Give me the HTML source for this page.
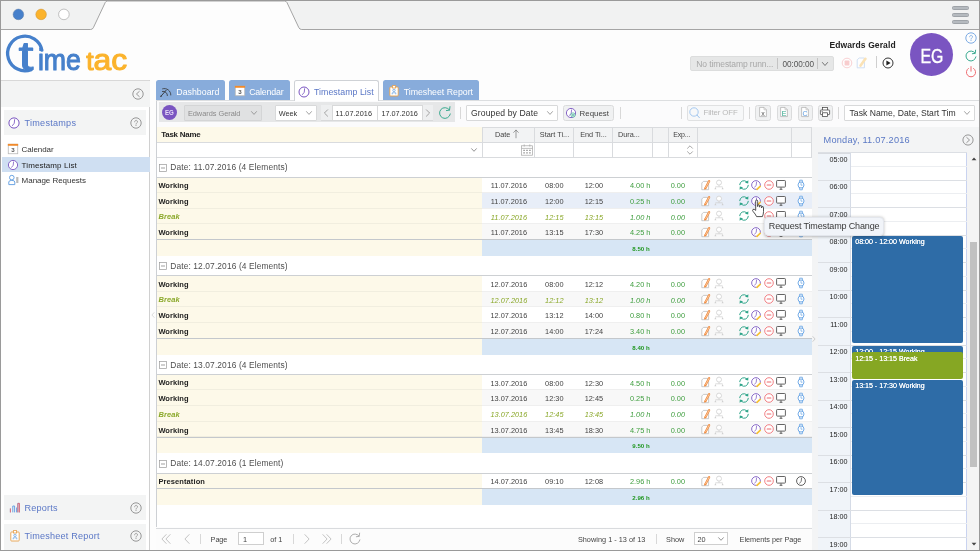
<!DOCTYPE html>
<html><head><meta charset="utf-8"><title>TimeTac - Timestamp List</title>
<style>
html,body{margin:0;padding:0;}
body{width:980px;height:551px;overflow:hidden;position:relative;background:#fdfdfd;font-family:"Liberation Sans",sans-serif;}
#app{position:absolute;left:0;top:0;width:980px;height:551px;overflow:hidden;will-change:transform;}
#app div,#app svg{position:absolute;box-sizing:border-box;}
#app svg{overflow:visible;}
.t{white-space:nowrap;}
</style></head><body><div id="app">
<div style="left:0.00px;top:0.00px;width:980.00px;height:30.00px;background:#f1f2f2;"></div>
<svg style="left:0.00px;top:0.00px;" width="980" height="31" viewBox="0 0 980 31"><path d="M0 29.5 L90.5 29.5 Q92.6 29.5 93.4 27.6 L105.2 2.6 Q106 1 107.6 1 L284.6 1 Q286.2 1 287 2.6 L298.8 27.6 Q299.6 29.5 301.7 29.5 L980 29.5 L980 31 L0 31 Z" fill="#fdfdfd" stroke="#8f8f8f" stroke-width="0.8"/></svg>
<div style="left:0.00px;top:30.20px;width:980.00px;height:1.50px;background:#fdfdfd;"></div>
<svg style="left:0.00px;top:0.00px;" width="80" height="30" viewBox="0 0 80 30"><circle cx="18.4" cy="14.4" r="5.3" fill="#4680cb" stroke="#5f7da5" stroke-width="0.5"/><circle cx="41.1" cy="14.4" r="5.3" fill="#fbb32c" stroke="#c9923a" stroke-width="0.5"/><circle cx="63.9" cy="14.4" r="5.3" fill="#fff" stroke="#9a9a9a" stroke-width="0.6"/></svg>
<div style="left:952.00px;top:5.70px;width:17.00px;height:4.00px;background:#b5babf;border:0.6px solid #9ea3a8;border-radius:1.5px;"></div>
<div style="left:952.00px;top:12.70px;width:17.00px;height:4.00px;background:#b5babf;border:0.6px solid #9ea3a8;border-radius:1.5px;"></div>
<div style="left:952.00px;top:19.50px;width:17.00px;height:4.00px;background:#b5babf;border:0.6px solid #9ea3a8;border-radius:1.5px;"></div>
<svg style="left:0.00px;top:0.00px;" width="160" height="80" viewBox="0 0 160 80"><path d="M31.2 69.6 A17.3 17.3 0 1 1 41.9 50.2" fill="none" stroke="#4680cb" stroke-width="3.3" stroke-linecap="round"/><text y="70.3" font-family="Liberation Sans, sans-serif" stroke-linejoin="round" stroke-linecap="round" fill="#4680cb" stroke="#4680cb"><tspan x="18.6" font-size="40" stroke-width="0.9" textLength="15" lengthAdjust="spacingAndGlyphs">t</tspan><tspan x="37.9" font-size="30" stroke-width="1.1" textLength="43" lengthAdjust="spacingAndGlyphs">ime</tspan></text><text x="86.2" y="70.2" font-family="Liberation Sans, sans-serif" stroke-linejoin="round" stroke-linecap="round" font-size="30" fill="#fbb32c" stroke="#fbb32c" stroke-width="1.1" textLength="41" lengthAdjust="spacingAndGlyphs"><tspan font-size="25">t</tspan>ac</text></svg>
<div class="t" style="top:40px;height:10px;line-height:10px;font-size:8.5px;color:#222;font-weight:bold;left:829.50px;letter-spacing:0.106px;">Edwards Gerald</div>
<div style="left:909.80px;top:32.70px;width:43.40px;height:43.40px;background:#7a55c1;border-radius:50%;"></div>
<div class="t" style="top:45px;height:22px;line-height:22px;font-size:19.6px;color:#fff;left:781.50px;width:300px;text-align:center;transform:scaleX(0.81);-webkit-text-stroke:0.35px #fff;">EG</div>
<svg style="left:971.00px;top:38.40px;" width="1" height="1" viewBox="0 0 1 1"><circle cx="0" cy="0" r="5.2" fill="none" stroke="#6ea2e0" stroke-width="0.9"/><path d="M-1.37 -1.16 C-1.37 -3.24 1.58 -3.24 1.50 -1.04 C1.41 0.08 0 -0.08 0 1.16" fill="none" stroke="#6ea2e0" stroke-width="0.77" stroke-linecap="round"/><circle cx="0" cy="2.50" r="0.50" fill="#6ea2e0"/></svg>
<svg style="left:971.00px;top:55.60px;" width="1" height="1" viewBox="0 0 1 1"><path d="M4.10 -2.87 A5 5 0 1 0 4.92 0.87" fill="none" stroke="#2fa58a" stroke-width="0.95" stroke-linecap="round"/><path d="M1.35 -2.27 L4.20 -2.67 L4.60 -5.87" fill="none" stroke="#2fa58a" stroke-width="0.95" stroke-linecap="round" stroke-linejoin="round"/></svg>
<svg style="left:971.00px;top:71.80px;" width="1" height="1" viewBox="0 0 1 1"><path d="M-2.6 -3.6 A4.6 4.6 0 1 0 2.6 -3.6" fill="none" stroke="#ee6a6f" stroke-width="1" stroke-linecap="round"/><path d="M0 -5.4 L0 -0.8" stroke="#ee6a6f" stroke-width="1" stroke-linecap="round"/></svg>
<div style="left:690.10px;top:55.60px;width:143.70px;height:15.60px;background:#e6e7e7;border:0.7px solid #dcdddd;border-radius:2px;"></div>
<div class="t" style="top:59px;height:10px;line-height:10px;font-size:8.5px;color:#a8a8a8;left:696.30px;letter-spacing:-0.094px;">No timestamp runn...</div>
<div style="left:777.30px;top:58.00px;width:0.70px;height:11.40px;background:#c4c4c4;"></div>
<div class="t" style="top:60px;height:9px;line-height:9px;font-size:8.2px;color:#555;left:782.50px;letter-spacing:-0.060px;">00:00:00</div>
<div style="left:817.30px;top:58.00px;width:0.70px;height:11.40px;background:#c4c4c4;"></div>
<svg style="left:825.40px;top:63.80px;" width="1" height="1" viewBox="0 0 1 1"><path d="M-2.6 -1.5 L0 1.5 L2.6 -1.5" fill="none" stroke="#666" stroke-width="0.9" stroke-linecap="round" stroke-linejoin="round"/></svg>
<svg style="left:847.00px;top:62.90px;" width="1" height="1" viewBox="0 0 1 1"><g opacity="0.33"><circle cx="0" cy="0" r="4.8" fill="#fff" stroke="#ee6a6f" stroke-width="0.9"/><rect x="-2.4" y="-2.4" width="4.8" height="4.8" rx="0.6" fill="#ee6a6f"/></g></svg>
<svg style="left:862.40px;top:62.90px;" width="1" height="1" viewBox="0 0 1 1"><g opacity="0.4"><path d="M-4.8 -3.2 L-2.8 -5 L2.4 -5 L2.4 4.8 L-4.8 4.8 Z" fill="#fff" stroke="#7fa9e0" stroke-width="0.9"/><path d="M-1.4 2.6 L3.4 -4.2" stroke="#f6b94a" stroke-width="2.6" stroke-linecap="round"/></g></svg>
<div style="left:876.00px;top:56.00px;width:0.80px;height:12.40px;background:#cfcfcf;"></div>
<svg style="left:888.20px;top:62.90px;" width="1" height="1" viewBox="0 0 1 1"><circle cx="0" cy="0" r="5" fill="#fff" stroke="#333" stroke-width="1"/><path d="M-1.6 -2.6 L2.6 0 L-1.6 2.6 Z" fill="#222"/></svg>
<div style="left:1.00px;top:80.00px;width:149.30px;height:471.00px;background:#fff;border-right:0.8px solid #d0d0d0;border-top:0.8px solid #d8d8d8;"></div>
<div style="left:1.00px;top:80.60px;width:148.60px;height:26.20px;background:#f3f4f4;"></div>
<svg style="left:138.00px;top:93.60px;" width="1" height="1" viewBox="0 0 1 1"><circle cx="0" cy="0" r="5.2" fill="none" stroke="#8c8c8c" stroke-width="0.9"/><path d="M1.3 -2.6 L-1.56 0 L1.3 2.6" fill="none" stroke="#8c8c8c" stroke-width="0.9" stroke-linecap="round" stroke-linejoin="round"/></svg>
<div style="left:4.00px;top:109.60px;width:142.40px;height:25.40px;background:#f3f4f4;"></div>
<svg style="left:14.00px;top:122.70px;" width="1" height="1" viewBox="0 0 1 1"><circle cx="0" cy="0" r="5.1" fill="#fff" stroke="#7a55c1" stroke-width="1.0"/><path d="M0.61 -3.37 L0.26 0.26 L-1.53 2.55" fill="none" stroke="#7a55c1" stroke-width="0.85" stroke-linecap="round" stroke-linejoin="round"/></svg>
<div class="t" style="top:118px;height:10px;line-height:10px;font-size:9.1px;color:#5a77c6;left:24.50px;letter-spacing:0.254px;">Timestamps</div>
<svg style="left:136.20px;top:122.70px;" width="1" height="1" viewBox="0 0 1 1"><circle cx="0" cy="0" r="5.2" fill="none" stroke="#8c8c8c" stroke-width="0.9"/><path d="M-1.37 -1.16 C-1.37 -3.24 1.58 -3.24 1.50 -1.04 C1.41 0.08 0 -0.08 0 1.16" fill="none" stroke="#8c8c8c" stroke-width="0.77" stroke-linecap="round"/><circle cx="0" cy="2.50" r="0.50" fill="#8c8c8c"/></svg>
<svg style="left:13.20px;top:149.30px;" width="1" height="1" viewBox="0 0 1 1"><g transform="scale(0.95)"><rect x="-5" y="-5" width="10" height="10" fill="#fff" stroke="#b5b5b5" stroke-width="0.8"/><rect x="-5.4" y="-5.4" width="10.8" height="2" fill="#f08a2b"/><text x="0" y="3.6" font-size="6.5" font-weight="bold" text-anchor="middle" fill="#555" font-family="Liberation Sans, sans-serif">3</text></g></svg>
<div class="t" style="top:145px;height:9px;line-height:9px;font-size:8.0px;color:#333;left:21.60px;letter-spacing:-0.067px;">Calendar</div>
<div style="left:1.50px;top:157.20px;width:148.00px;height:14.90px;background:#cfdff2;"></div>
<svg style="left:13.20px;top:164.70px;" width="1" height="1" viewBox="0 0 1 1"><circle cx="0" cy="0" r="4.6" fill="#fff" stroke="#7a55c1" stroke-width="0.9"/><path d="M0.55 -3.04 L0.23 0.23 L-1.38 2.30" fill="none" stroke="#7a55c1" stroke-width="0.77" stroke-linecap="round" stroke-linejoin="round"/></svg>
<div class="t" style="top:161px;height:9px;line-height:9px;font-size:8.0px;color:#222;left:21.60px;letter-spacing:0.089px;">Timestamp List</div>
<svg style="left:12.80px;top:180.00px;" width="1" height="1" viewBox="0 0 1 1"><circle cx="-1.2" cy="-2.4" r="2.3" fill="#fff" stroke="#5b9be0" stroke-width="0.9"/><path d="M-4.2 4.6 L-4.2 2 Q-4.2 0.4 -1.2 0.4 Q1.8 0.4 1.8 2 L1.8 4.6 Z" fill="#fff" stroke="#5b9be0" stroke-width="0.9" stroke-linejoin="round"/><path d="M3.2 -2 L5.4 -2 M3.2 0 L5.4 0 M3.2 2 L5.4 2" stroke="#666" stroke-width="0.9"/></svg>
<div class="t" style="top:176px;height:9px;line-height:9px;font-size:8.0px;color:#333;left:21.60px;letter-spacing:-0.038px;">Manage Requests</div>
<div style="left:4.00px;top:494.60px;width:142.40px;height:25.80px;background:#f3f4f4;"></div>
<svg style="left:14.50px;top:507.60px;" width="1" height="1" viewBox="0 0 1 1"><path d="M-4.6 4.4 L-4.6 0.5 M-2.2 4.4 L-2.2 -2 L-0.4 -2 L-0.4 4.4 M1.6 4.4 L1.6 -0.5 M4.4 4.4 L4.4 -4.6 L2.8 -4.6 L2.8 4.4" fill="none" stroke="#5b9be0" stroke-width="0.9"/><path d="M-4.6 4.4 L-4.6 0.5 M4.4 4.4 L4.4 -4.6 L2.9 -4.6 L2.9 4.4" fill="none" stroke="#ee6a6f" stroke-width="0.9"/></svg>
<div class="t" style="top:503px;height:10px;line-height:10px;font-size:9.1px;color:#5a77c6;left:24.50px;letter-spacing:0.189px;">Reports</div>
<svg style="left:136.20px;top:507.60px;" width="1" height="1" viewBox="0 0 1 1"><circle cx="0" cy="0" r="5.2" fill="none" stroke="#8c8c8c" stroke-width="0.9"/><path d="M-1.37 -1.16 C-1.37 -3.24 1.58 -3.24 1.50 -1.04 C1.41 0.08 0 -0.08 0 1.16" fill="none" stroke="#8c8c8c" stroke-width="0.77" stroke-linecap="round"/><circle cx="0" cy="2.50" r="0.50" fill="#8c8c8c"/></svg>
<div style="left:4.00px;top:523.80px;width:142.40px;height:27.00px;background:#f3f4f4;"></div>
<svg style="left:14.50px;top:536.30px;" width="1" height="1" viewBox="0 0 1 1"><rect x="-4.2" y="-4" width="8.4" height="9" rx="0.8" fill="#fff" stroke="#e6a04c" stroke-width="0.9"/><rect x="-1.6" y="-5.4" width="3.2" height="2.4" fill="#fff" stroke="#e6a04c" stroke-width="0.8"/><circle cx="0" cy="-0.6" r="1.2" fill="none" stroke="#5b9be0" stroke-width="0.7"/><path d="M-1.8 3.4 L-1.8 1.8 L1.8 1.8 L1.8 3.4" fill="none" stroke="#5b9be0" stroke-width="0.7"/></svg>
<div class="t" style="top:531px;height:10px;line-height:10px;font-size:9.1px;color:#5a77c6;left:24.50px;letter-spacing:0.201px;">Timesheet Report</div>
<svg style="left:136.20px;top:536.20px;" width="1" height="1" viewBox="0 0 1 1"><circle cx="0" cy="0" r="5.2" fill="none" stroke="#8c8c8c" stroke-width="0.9"/><path d="M-1.37 -1.16 C-1.37 -3.24 1.58 -3.24 1.50 -1.04 C1.41 0.08 0 -0.08 0 1.16" fill="none" stroke="#8c8c8c" stroke-width="0.77" stroke-linecap="round"/><circle cx="0" cy="2.50" r="0.50" fill="#8c8c8c"/></svg>
<div style="left:156.00px;top:100.00px;width:824.00px;height:26.50px;background:#fbfbfc;border-top:0.8px solid #dcdee0;"></div>
<div style="left:156.00px;top:80.00px;width:69.00px;height:20.00px;background:#88acdb;border-radius:2.5px 2.5px 0 0;"></div>
<div class="t" style="top:87px;height:10px;line-height:10px;font-size:8.8px;color:#fff;left:176.30px;letter-spacing:0.006px;">Dashboard</div>
<svg style="left:165.60px;top:91.60px;" width="1" height="1" viewBox="0 0 1 1"><path d="M-3.4 -3.2 A6.2 6.2 0 0 1 4.8 3 M-3.6 -0.6 A4 4 0 0 1 1.4 3.6" fill="none" stroke="#333" stroke-width="0.8" stroke-linecap="round"/><path d="M-5 4.2 L0.2 -1.8" stroke="#333" stroke-width="0.9" stroke-linecap="round"/><circle cx="-5" cy="4.3" r="0.7" fill="#333"/></svg>
<div style="left:229.00px;top:80.00px;width:60.60px;height:20.00px;background:#88acdb;border-radius:2.5px 2.5px 0 0;"></div>
<div class="t" style="top:87px;height:10px;line-height:10px;font-size:8.8px;color:#fff;left:249.20px;letter-spacing:-0.173px;">Calendar</div>
<svg style="left:239.50px;top:91.30px;" width="1" height="1" viewBox="0 0 1 1"><g transform="scale(0.95)"><rect x="-5" y="-5" width="10" height="10" fill="#fff" stroke="#b5b5b5" stroke-width="0.8"/><rect x="-5.4" y="-5.4" width="10.8" height="2" fill="#f08a2b"/><text x="0" y="3.6" font-size="6.5" font-weight="bold" text-anchor="middle" fill="#555" font-family="Liberation Sans, sans-serif">3</text></g></svg>
<div style="left:294.00px;top:79.80px;width:85.40px;height:21.40px;background:#fff;border:0.8px solid #cfd2d6;border-bottom:none;border-radius:2.5px 2.5px 0 0;"></div>
<div class="t" style="top:87px;height:10px;line-height:10px;font-size:8.8px;color:#5a77c6;left:314.00px;letter-spacing:0.028px;">Timestamp List</div>
<svg style="left:304.00px;top:91.50px;" width="1" height="1" viewBox="0 0 1 1"><circle cx="0" cy="0" r="5" fill="#fff" stroke="#7a55c1" stroke-width="1.0"/><path d="M0.60 -3.30 L0.25 0.25 L-1.50 2.50" fill="none" stroke="#7a55c1" stroke-width="0.85" stroke-linecap="round" stroke-linejoin="round"/></svg>
<div style="left:383.00px;top:80.00px;width:95.60px;height:20.00px;background:#88acdb;border-radius:2.5px 2.5px 0 0;"></div>
<div class="t" style="top:87px;height:10px;line-height:10px;font-size:8.8px;color:#fff;left:403.70px;letter-spacing:-0.014px;">Timesheet Report</div>
<svg style="left:393.60px;top:91.40px;" width="1" height="1" viewBox="0 0 1 1"><rect x="-4.2" y="-4" width="8.4" height="9" rx="0.8" fill="#fff" stroke="#e6a04c" stroke-width="0.9"/><rect x="-1.6" y="-5.4" width="3.2" height="2.4" fill="#fff" stroke="#e6a04c" stroke-width="0.8"/><circle cx="0" cy="-0.6" r="1.2" fill="none" stroke="#5b9be0" stroke-width="0.7"/><path d="M-1.8 3.4 L-1.8 1.8 L1.8 1.8 L1.8 3.4" fill="none" stroke="#5b9be0" stroke-width="0.7"/></svg>
<div style="left:158.60px;top:102.20px;width:296.60px;height:20.00px;background:#e6e7e8;"></div>
<div style="left:161.60px;top:105.00px;width:15.40px;height:15.40px;background:#7a55c1;border-radius:50%;"></div>
<div class="t" style="top:109px;height:7px;line-height:7px;font-size:7.0px;color:#e6dcf7;font-weight:bold;left:165.30px;transform:scaleX(0.8701);transform-origin:0 50%;">EG</div>
<div style="left:184.30px;top:104.60px;width:77.70px;height:16.00px;background:#e0e1e2;border:0.8px solid #d4d5d6;border-radius:1px;"></div>
<div class="t" style="top:109px;height:9px;line-height:9px;font-size:7.4px;color:#8a8a8a;left:187.90px;letter-spacing:-0.035px;">Edwards Gerald</div>
<svg style="left:254.40px;top:112.60px;" width="1" height="1" viewBox="0 0 1 1"><path d="M-2.5 -1.4 L0 1.4 L2.5 -1.4" fill="none" stroke="#8a8a8a" stroke-width="0.8" stroke-linecap="round" stroke-linejoin="round"/></svg>
<div style="left:275.00px;top:104.60px;width:41.60px;height:16.00px;background:#fff;border:0.8px solid #d8d9da;border-radius:1px;"></div>
<div class="t" style="top:109px;height:9px;line-height:9px;font-size:7.3px;color:#333;left:278.70px;letter-spacing:-0.043px;">Week</div>
<svg style="left:309.00px;top:112.60px;" width="1" height="1" viewBox="0 0 1 1"><path d="M-2.5 -1.4 L0 1.4 L2.5 -1.4" fill="none" stroke="#8a8a8a" stroke-width="0.8" stroke-linecap="round" stroke-linejoin="round"/></svg>
<div style="left:321.00px;top:104.60px;width:112.40px;height:16.00px;background:#fff;border:0.8px solid #d8d9da;"></div>
<div style="left:321.40px;top:105.00px;width:10.30px;height:15.20px;background:#eeeff0;"></div>
<div style="left:422.40px;top:105.00px;width:10.60px;height:15.20px;background:#eeeff0;"></div>
<div style="left:331.70px;top:104.60px;width:0.80px;height:16.00px;background:#d8d9da;"></div>
<div style="left:377.00px;top:104.60px;width:0.80px;height:16.00px;background:#d8d9da;"></div>
<div style="left:422.40px;top:104.60px;width:0.80px;height:16.00px;background:#d8d9da;"></div>
<svg style="left:326.40px;top:112.70px;" width="1" height="1" viewBox="0 0 1 1"><path d="M1.6 -3.2 L-1.6 0 L1.6 3.2" fill="none" stroke="#999" stroke-width="0.9" stroke-linecap="round" stroke-linejoin="round"/></svg>
<svg style="left:428.00px;top:112.70px;" width="1" height="1" viewBox="0 0 1 1"><path d="M-1.6 -3.2 L1.6 0 L-1.6 3.2" fill="none" stroke="#999" stroke-width="0.9" stroke-linecap="round" stroke-linejoin="round"/></svg>
<div class="t" style="top:109px;height:9px;line-height:9px;font-size:7.3px;color:#333;left:335.60px;letter-spacing:0.045px;">11.07.2016</div>
<div class="t" style="top:109px;height:9px;line-height:9px;font-size:7.3px;color:#333;left:381.40px;letter-spacing:-0.015px;">17.07.2016</div>
<svg style="left:444.80px;top:112.60px;" width="1" height="1" viewBox="0 0 1 1"><path d="M4.42 -3.10 A5.4 5.4 0 1 0 5.32 0.94" fill="none" stroke="#2fa58a" stroke-width="0.95" stroke-linecap="round"/><path d="M1.45 -2.45 L4.52 -2.90 L4.96 -6.34" fill="none" stroke="#2fa58a" stroke-width="0.95" stroke-linecap="round" stroke-linejoin="round"/></svg>
<div style="left:460.40px;top:106.50px;width:0.80px;height:12.00px;background:#d8d8d8;"></div>
<div style="left:466.00px;top:104.60px;width:91.50px;height:16.00px;background:#fff;border:0.8px solid #d8d9da;border-radius:1px;"></div>
<div class="t" style="top:108px;height:10px;line-height:10px;font-size:8.6px;color:#333;left:471.00px;letter-spacing:0.107px;">Grouped by Date</div>
<svg style="left:549.90px;top:112.60px;" width="1" height="1" viewBox="0 0 1 1"><path d="M-2.5 -1.4 L0 1.4 L2.5 -1.4" fill="none" stroke="#8a8a8a" stroke-width="0.8" stroke-linecap="round" stroke-linejoin="round"/></svg>
<div style="left:562.80px;top:104.60px;width:51.70px;height:16.00px;background:#f0f1f2;border:0.8px solid #dadbdc;border-radius:2.5px;"></div>
<svg style="left:570.50px;top:112.60px;" width="1" height="1" viewBox="0 0 1 1"><circle cx="0" cy="0" r="4.6" fill="#fff" stroke="#7a55c1" stroke-width="0.9"/><path d="M0.55 -3.04 L0.23 0.23 L-1.38 2.30" fill="none" stroke="#7a55c1" stroke-width="0.77" stroke-linecap="round" stroke-linejoin="round"/></svg>
<svg style="left:573.30px;top:115.30px;" width="1" height="1" viewBox="0 0 1 1"><circle cx="0" cy="0" r="2.1" fill="#fff" stroke="#2fa58a" stroke-width="0.7"/><path d="M0 -1 L0 1 M-1 0 L1 0" stroke="#2fa58a" stroke-width="0.7"/></svg>
<div class="t" style="top:109px;height:9px;line-height:9px;font-size:7.9px;color:#444;left:579.60px;letter-spacing:-0.004px;">Request</div>
<div style="left:620.20px;top:106.50px;width:0.80px;height:12.00px;background:#d8d8d8;"></div>
<div style="left:681.00px;top:106.50px;width:0.80px;height:12.00px;background:#d8d8d8;"></div>
<div style="left:687.40px;top:104.60px;width:56.30px;height:16.00px;background:#f7f8f9;border:0.8px solid #e0e1e2;border-radius:2px;"></div>
<svg style="left:694.20px;top:111.70px;" width="1" height="1" viewBox="0 0 1 1"><circle cx="0" cy="0" r="4.2" fill="none" stroke="#9cc3ee" stroke-width="0.9"/><path d="M3.1 3.2 L5.4 5.7" stroke="#9cc3ee" stroke-width="1" stroke-linecap="round"/></svg>
<div class="t" style="top:108px;height:9px;line-height:9px;font-size:7.8px;color:#b8b8b8;left:703.50px;letter-spacing:-0.089px;">Filter OFF</div>
<div style="left:749.00px;top:106.50px;width:0.80px;height:12.00px;background:#d8d8d8;"></div>
<div style="left:755.40px;top:104.60px;width:15.20px;height:16.00px;background:#f0f1f2;border:0.8px solid #dadbdc;border-radius:2.5px;"></div>
<svg style="left:763.00px;top:112.30px;" width="1" height="1" viewBox="0 0 1 1"><path d="M-3.4 -4.6 L1 -4.6 L3.4 -2.2 L3.4 4.6 L-3.4 4.6 Z" fill="#fff" stroke="#b4b4b4" stroke-width="0.8" stroke-linejoin="round"/><path d="M1 -4.6 L1 -2.2 L3.4 -2.2" fill="none" stroke="#b4b4b4" stroke-width="0.6"/><text x="0" y="3.7" font-size="7" text-anchor="middle" fill="#555" font-family="Liberation Sans, sans-serif">x</text></svg>
<div style="left:776.60px;top:104.60px;width:15.20px;height:16.00px;background:#f0f1f2;border:0.8px solid #dadbdc;border-radius:2.5px;"></div>
<svg style="left:784.20px;top:112.30px;" width="1" height="1" viewBox="0 0 1 1"><path d="M-3.4 -4.6 L1 -4.6 L3.4 -2.2 L3.4 4.6 L-3.4 4.6 Z" fill="#fff" stroke="#b4b4b4" stroke-width="0.8" stroke-linejoin="round"/><path d="M1 -4.6 L1 -2.2 L3.4 -2.2" fill="none" stroke="#b4b4b4" stroke-width="0.6"/><text x="0" y="3.7" font-size="7" text-anchor="middle" fill="#2fa58a" font-family="Liberation Sans, sans-serif">E</text></svg>
<div style="left:797.50px;top:104.60px;width:15.10px;height:16.00px;background:#f0f1f2;border:0.8px solid #dadbdc;border-radius:2.5px;"></div>
<svg style="left:805.05px;top:112.30px;" width="1" height="1" viewBox="0 0 1 1"><path d="M-3.4 -4.6 L1 -4.6 L3.4 -2.2 L3.4 4.6 L-3.4 4.6 Z" fill="#fff" stroke="#b4b4b4" stroke-width="0.8" stroke-linejoin="round"/><path d="M1 -4.6 L1 -2.2 L3.4 -2.2" fill="none" stroke="#b4b4b4" stroke-width="0.6"/><text x="0" y="3.7" font-size="7" text-anchor="middle" fill="#5b9be0" font-family="Liberation Sans, sans-serif">C</text></svg>
<div style="left:817.70px;top:104.60px;width:15.30px;height:16.00px;background:#f0f1f2;border:0.8px solid #dadbdc;border-radius:2.5px;"></div>
<svg style="left:825.40px;top:112.30px;" width="1" height="1" viewBox="0 0 1 1"><rect x="-2.6" y="-4.6" width="5.2" height="3" fill="#fff" stroke="#444" stroke-width="0.75"/><rect x="-4.6" y="-2" width="9.2" height="4.6" rx="0.6" fill="#fff" stroke="#444" stroke-width="0.75"/><rect x="-2.6" y="0.8" width="5.2" height="3.8" fill="#fff" stroke="#444" stroke-width="0.75"/><path d="M-3.4 -0.4 L-2.2 -0.4" stroke="#444" stroke-width="0.7"/></svg>
<div style="left:838.00px;top:106.50px;width:0.80px;height:12.00px;background:#d8d8d8;"></div>
<div style="left:844.00px;top:104.60px;width:130.80px;height:16.00px;background:#fff;border:0.8px solid #d8d9da;border-radius:1px;"></div>
<div class="t" style="top:108px;height:10px;line-height:10px;font-size:8.6px;color:#333;left:849.50px;letter-spacing:0.042px;">Task Name, Date, Start Tim</div>
<svg style="left:967.20px;top:112.60px;" width="1" height="1" viewBox="0 0 1 1"><path d="M-2.5 -1.4 L0 1.4 L2.5 -1.4" fill="none" stroke="#8a8a8a" stroke-width="0.8" stroke-linecap="round" stroke-linejoin="round"/></svg>
<div style="left:156.10px;top:126.50px;width:655.60px;height:400.50px;background:#fff;"></div>
<div style="left:156.10px;top:126.50px;width:655.60px;height:16.00px;background:#f2f3f4;border-top:0.8px solid #d9dbde;border-bottom:0.8px solid #d9dbde;"></div>
<div style="left:156.10px;top:127.20px;width:326.00px;height:14.60px;background:#fdf9e9;"></div>
<div style="left:481.70px;top:126.50px;width:0.80px;height:31.00px;background:#d9dbde;"></div>
<div style="left:533.90px;top:126.50px;width:0.80px;height:31.00px;background:#d9dbde;"></div>
<div style="left:573.20px;top:126.50px;width:0.80px;height:31.00px;background:#d9dbde;"></div>
<div style="left:612.10px;top:126.50px;width:0.80px;height:31.00px;background:#d9dbde;"></div>
<div style="left:651.50px;top:126.50px;width:0.80px;height:31.00px;background:#d9dbde;"></div>
<div style="left:668.00px;top:126.50px;width:0.80px;height:31.00px;background:#d9dbde;"></div>
<div style="left:697.40px;top:126.50px;width:0.80px;height:31.00px;background:#d9dbde;"></div>
<div style="left:791.00px;top:126.50px;width:0.80px;height:31.00px;background:#d9dbde;"></div>
<div style="left:811.30px;top:126.50px;width:0.80px;height:31.00px;background:#d9dbde;"></div>
<div class="t" style="top:130px;height:9px;line-height:9px;font-size:7.9px;color:#222;font-weight:bold;left:161.20px;letter-spacing:-0.192px;">Task Name</div>
<div class="t" style="top:130px;height:9px;line-height:9px;font-size:7.3px;color:#444;left:495.00px;letter-spacing:-0.007px;">Date</div>
<svg style="left:516.00px;top:134.40px;" width="1" height="1" viewBox="0 0 1 1"><path d="M0 3.8 L0 -3.8 M-2.3 -1.6 L0 -4 L2.3 -1.6" fill="none" stroke="#777" stroke-width="0.7" stroke-linecap="round" stroke-linejoin="round"/></svg>
<div class="t" style="top:130px;height:9px;line-height:9px;font-size:7.3px;color:#444;left:539.80px;letter-spacing:0.019px;">Start Ti...</div>
<div class="t" style="top:130px;height:9px;line-height:9px;font-size:7.3px;color:#444;left:580.20px;letter-spacing:-0.035px;">End Ti...</div>
<div class="t" style="top:130px;height:9px;line-height:9px;font-size:7.3px;color:#444;left:618.00px;letter-spacing:-0.035px;">Dura...</div>
<div class="t" style="top:131px;height:7px;line-height:7px;font-size:7.0px;color:#444;left:673.20px;letter-spacing:-0.139px;">Exp...</div>
<div style="left:156.10px;top:157.20px;width:655.60px;height:0.80px;background:#d9dbde;"></div>
<svg style="left:474.40px;top:150.20px;" width="1" height="1" viewBox="0 0 1 1"><path d="M-2.4 -1.3 L0 1.3 L2.4 -1.3" fill="none" stroke="#888" stroke-width="0.9" stroke-linecap="round" stroke-linejoin="round"/></svg>
<svg style="left:527.00px;top:150.40px;" width="1" height="1" viewBox="0 0 1 1"><rect x="-5.4" y="-4.2" width="10.8" height="9.4" fill="#fff" stroke="#a5a5a5" stroke-width="0.7"/><path d="M-5.4 -1.6 L5.4 -1.6 M-2.8 -5.6 L-2.8 -3.4 M2.8 -5.6 L2.8 -3.4" stroke="#a5a5a5" stroke-width="0.7"/><path d="M-3.8 0.4 L-2 0.4 M-0.9 0.4 L0.9 0.4 M2 0.4 L3.8 0.4 M-3.8 2.8 L-2 2.8 M-0.9 2.8 L0.9 2.8 M2 2.8 L3.8 2.8" stroke="#a5a5a5" stroke-width="1.3"/></svg>
<svg style="left:689.70px;top:150.20px;" width="1" height="1" viewBox="0 0 1 1"><path d="M-2.5 -1.7 L0 -4.2 L2.5 -1.7 M-2.5 1.7 L0 4.2 L2.5 1.7" fill="none" stroke="#8a8a8a" stroke-width="0.75" stroke-linecap="round" stroke-linejoin="round"/></svg>
<svg style="left:162.65px;top:167.50px;" width="1" height="1" viewBox="0 0 1 1"><rect x="-3.5" y="-3.5" width="7" height="7" fill="#fff" stroke="#999" stroke-width="0.7"/><path d="M-2 0 L2 0" stroke="#777" stroke-width="0.7"/></svg>
<div class="t" style="top:162px;height:10px;line-height:10px;font-size:8.4px;color:#4e4e4e;left:170.30px;letter-spacing:0.140px;">Date: 11.07.2016 (4 Elements)</div>
<div style="left:482.10px;top:177.10px;width:329.60px;height:15.72px;background:#fff;"></div>
<div style="left:156.10px;top:177.10px;width:326.00px;height:15.72px;background:#fdf9e9;"></div>
<div style="left:156.10px;top:192.00px;width:326.00px;height:1.00px;background:#f1eedf;"></div>
<div style="left:482.10px;top:192.00px;width:329.60px;height:1.00px;background:#efefef;"></div>
<div class="t" style="top:181px;height:9px;line-height:9px;font-size:7.5px;color:#222;font-weight:bold;left:158.40px;letter-spacing:0.040px;">Working</div>
<div class="t" style="top:181px;height:9px;line-height:9px;font-size:7.35px;color:#444;left:358.90px;width:300px;text-align:center;">11.07.2016</div>
<div class="t" style="top:181px;height:9px;line-height:9px;font-size:7.35px;color:#444;left:404.30px;width:300px;text-align:center;">08:00</div>
<div class="t" style="top:181px;height:9px;line-height:9px;font-size:7.35px;color:#444;left:443.90px;width:300px;text-align:center;">12:00</div>
<div class="t" style="top:181px;height:9px;line-height:9px;font-size:7.35px;color:#3f9e3f;right:329.60px;">4.00 h</div>
<div class="t" style="top:181px;height:9px;line-height:9px;font-size:7.35px;color:#3f9e3f;left:670.70px;">0.00</div>
<svg style="left:706.30px;top:184.81px;" width="1" height="1" viewBox="0 0 1 1"><g><path d="M-4.2 -2 L-2.6 -3.6 L2.6 -3.6 L2.6 4.7 L-4.2 4.7 Z" fill="#fff" stroke="#bdbdbd" stroke-width="0.8" stroke-linejoin="round"/><path d="M-0.6 3.2 L3.2 -3.9" stroke="#f0893a" stroke-width="2.2" stroke-linecap="round"/><path d="M-0.5 3 L3.1 -3.7" stroke="#fde3cc" stroke-width="0.7" stroke-linecap="round"/><path d="M-1.8 4.8 L-1.4 2.6 L0 3.6 Z" fill="#f0893a"/></g></svg>
<svg style="left:719.10px;top:185.01px;" width="1" height="1" viewBox="0 0 1 1"><circle cx="0" cy="-2.4" r="2.5" fill="#fff" stroke="#cfcfcf" stroke-width="0.8"/><path d="M0 0.2 L0 1.8 M-3.6 1.8 L3.6 1.8" fill="none" stroke="#cfcfcf" stroke-width="0.7"/><path d="M-4.6 4.3 L-3.6 2 L-2.6 4.3 Z M2.6 4.3 L3.6 2 L4.6 4.3 Z" fill="#cfcfcf"/></svg>
<svg style="left:743.90px;top:184.81px;" width="1" height="1" viewBox="0 0 1 1"><path d="M-4.3 -0.3 A4.3 4.3 0 0 1 2.67 -3.35" fill="none" stroke="#2fa58a" stroke-width="1.0" stroke-linecap="round"/><path d="M4.39 -4.82 L4.21 -1.38 L0.95 -2.15 Z" fill="#2fa58a"/><path d="M4.3 0.3 A4.3 4.3 0 0 1 -2.67 3.35" fill="none" stroke="#2fa58a" stroke-width="1.0" stroke-linecap="round"/><path d="M-4.39 4.82 L-4.21 1.38 L-0.95 2.15 Z" fill="#2fa58a"/></svg>
<svg style="left:756.20px;top:184.81px;" width="1" height="1" viewBox="0 0 1 1"><circle cx="0" cy="0" r="4.35" fill="#fff" stroke="#8565c6" stroke-width="0.95"/><path d="M0.52 -2.87 L0.22 0.22 L-1.30 2.17" fill="none" stroke="#8565c6" stroke-width="0.81" stroke-linecap="round" stroke-linejoin="round"/><path d="M0.87 4.35 L4.26 1.22" stroke="#fff" stroke-width="2.6" stroke-linecap="butt"/><path d="M0.96 4.26 L4.13 1.30" stroke="#f6c234" stroke-width="1.7" stroke-linecap="round"/></svg>
<svg style="left:768.70px;top:184.81px;" width="1" height="1" viewBox="0 0 1 1"><circle cx="0" cy="0" r="4.3" fill="#fff" stroke="#ee6a6f" stroke-width="0.85"/><path d="M-1.8059999999999998 0 L1.8059999999999998 0" stroke="#ee6a6f" stroke-width="1.2" stroke-linecap="round"/></svg>
<svg style="left:781.00px;top:184.81px;" width="1" height="1" viewBox="0 0 1 1"><rect x="-4.4" y="-4.5" width="8.8" height="6.6" rx="0.7" fill="#fff" stroke="#5c5c5c" stroke-width="0.95"/><path d="M0 2.3 L0 4 M-1.4 4.3 L1.4 4.3" stroke="#5c5c5c" stroke-width="1" stroke-linecap="butt"/></svg>
<svg style="left:800.70px;top:184.81px;" width="1" height="1" viewBox="0 0 1 1"><path d="M-1.7 -2.6 L-1.3 -4.8 L1.3 -4.8 L1.7 -2.6 M-1.7 2.6 L-1.3 4.8 L1.3 4.8 L1.7 2.6" fill="#eaf2fb" stroke="#67a4e4" stroke-width="0.8" stroke-linejoin="round"/><circle cx="0" cy="0" r="3" fill="#fff" stroke="#67a4e4" stroke-width="0.9"/><path d="M0 -1.5 L0 0.2 L1.1 0.2" fill="none" stroke="#67a4e4" stroke-width="0.7" stroke-linecap="round"/></svg>
<div style="left:482.10px;top:192.82px;width:329.60px;height:15.72px;background:#e8eef8;"></div>
<div style="left:156.10px;top:192.82px;width:326.00px;height:15.72px;background:#fdf9e9;"></div>
<div style="left:156.10px;top:208.00px;width:326.00px;height:1.00px;background:#f1eedf;"></div>
<div style="left:482.10px;top:208.00px;width:329.60px;height:1.00px;background:#efefef;"></div>
<div class="t" style="top:197px;height:9px;line-height:9px;font-size:7.5px;color:#222;font-weight:bold;left:158.40px;letter-spacing:0.040px;">Working</div>
<div class="t" style="top:197px;height:9px;line-height:9px;font-size:7.35px;color:#444;left:358.90px;width:300px;text-align:center;">11.07.2016</div>
<div class="t" style="top:197px;height:9px;line-height:9px;font-size:7.35px;color:#444;left:404.30px;width:300px;text-align:center;">12:00</div>
<div class="t" style="top:197px;height:9px;line-height:9px;font-size:7.35px;color:#444;left:443.90px;width:300px;text-align:center;">12:15</div>
<div class="t" style="top:197px;height:9px;line-height:9px;font-size:7.35px;color:#3f9e3f;right:329.60px;">0.25 h</div>
<div class="t" style="top:197px;height:9px;line-height:9px;font-size:7.35px;color:#3f9e3f;left:670.70px;">0.00</div>
<svg style="left:706.30px;top:200.53px;" width="1" height="1" viewBox="0 0 1 1"><g><path d="M-4.2 -2 L-2.6 -3.6 L2.6 -3.6 L2.6 4.7 L-4.2 4.7 Z" fill="#fff" stroke="#bdbdbd" stroke-width="0.8" stroke-linejoin="round"/><path d="M-0.6 3.2 L3.2 -3.9" stroke="#f0893a" stroke-width="2.2" stroke-linecap="round"/><path d="M-0.5 3 L3.1 -3.7" stroke="#fde3cc" stroke-width="0.7" stroke-linecap="round"/><path d="M-1.8 4.8 L-1.4 2.6 L0 3.6 Z" fill="#f0893a"/></g></svg>
<svg style="left:719.10px;top:200.73px;" width="1" height="1" viewBox="0 0 1 1"><circle cx="0" cy="-2.4" r="2.5" fill="#fff" stroke="#cfcfcf" stroke-width="0.8"/><path d="M0 0.2 L0 1.8 M-3.6 1.8 L3.6 1.8" fill="none" stroke="#cfcfcf" stroke-width="0.7"/><path d="M-4.6 4.3 L-3.6 2 L-2.6 4.3 Z M2.6 4.3 L3.6 2 L4.6 4.3 Z" fill="#cfcfcf"/></svg>
<svg style="left:743.90px;top:200.53px;" width="1" height="1" viewBox="0 0 1 1"><path d="M-4.3 -0.3 A4.3 4.3 0 0 1 2.67 -3.35" fill="none" stroke="#2fa58a" stroke-width="1.0" stroke-linecap="round"/><path d="M4.39 -4.82 L4.21 -1.38 L0.95 -2.15 Z" fill="#2fa58a"/><path d="M4.3 0.3 A4.3 4.3 0 0 1 -2.67 3.35" fill="none" stroke="#2fa58a" stroke-width="1.0" stroke-linecap="round"/><path d="M-4.39 4.82 L-4.21 1.38 L-0.95 2.15 Z" fill="#2fa58a"/></svg>
<svg style="left:756.20px;top:200.53px;" width="1" height="1" viewBox="0 0 1 1"><circle cx="0" cy="0" r="4.35" fill="#fff" stroke="#8565c6" stroke-width="0.95"/><path d="M0.52 -2.87 L0.22 0.22 L-1.30 2.17" fill="none" stroke="#8565c6" stroke-width="0.81" stroke-linecap="round" stroke-linejoin="round"/><path d="M0.87 4.35 L4.26 1.22" stroke="#fff" stroke-width="2.6" stroke-linecap="butt"/><path d="M0.96 4.26 L4.13 1.30" stroke="#f6c234" stroke-width="1.7" stroke-linecap="round"/></svg>
<svg style="left:768.70px;top:200.53px;" width="1" height="1" viewBox="0 0 1 1"><circle cx="0" cy="0" r="4.3" fill="#fff" stroke="#ee6a6f" stroke-width="0.85"/><path d="M-1.8059999999999998 0 L1.8059999999999998 0" stroke="#ee6a6f" stroke-width="1.2" stroke-linecap="round"/></svg>
<svg style="left:781.00px;top:200.53px;" width="1" height="1" viewBox="0 0 1 1"><rect x="-4.4" y="-4.5" width="8.8" height="6.6" rx="0.7" fill="#fff" stroke="#5c5c5c" stroke-width="0.95"/><path d="M0 2.3 L0 4 M-1.4 4.3 L1.4 4.3" stroke="#5c5c5c" stroke-width="1" stroke-linecap="butt"/></svg>
<svg style="left:800.70px;top:200.53px;" width="1" height="1" viewBox="0 0 1 1"><path d="M-1.7 -2.6 L-1.3 -4.8 L1.3 -4.8 L1.7 -2.6 M-1.7 2.6 L-1.3 4.8 L1.3 4.8 L1.7 2.6" fill="#eaf2fb" stroke="#67a4e4" stroke-width="0.8" stroke-linejoin="round"/><circle cx="0" cy="0" r="3" fill="#fff" stroke="#67a4e4" stroke-width="0.9"/><path d="M0 -1.5 L0 0.2 L1.1 0.2" fill="none" stroke="#67a4e4" stroke-width="0.7" stroke-linecap="round"/></svg>
<div style="left:482.10px;top:208.54px;width:329.60px;height:15.72px;background:#fff;"></div>
<div style="left:156.10px;top:208.54px;width:326.00px;height:15.72px;background:#fdf9e9;"></div>
<div style="left:156.10px;top:223.00px;width:326.00px;height:1.00px;background:#f1eedf;"></div>
<div style="left:482.10px;top:223.00px;width:329.60px;height:1.00px;background:#efefef;"></div>
<div class="t" style="top:212px;height:9px;line-height:9px;font-size:7.5px;color:#8aa82a;font-weight:bold;font-style:italic;left:158.60px;letter-spacing:0.038px;">Break</div>
<div class="t" style="top:213px;height:9px;line-height:9px;font-size:7.35px;color:#8aa82a;font-style:italic;left:358.90px;width:300px;text-align:center;">11.07.2016</div>
<div class="t" style="top:213px;height:9px;line-height:9px;font-size:7.35px;color:#8aa82a;font-style:italic;left:404.30px;width:300px;text-align:center;">12:15</div>
<div class="t" style="top:213px;height:9px;line-height:9px;font-size:7.35px;color:#8aa82a;font-style:italic;left:443.90px;width:300px;text-align:center;">13:15</div>
<div class="t" style="top:213px;height:9px;line-height:9px;font-size:7.35px;color:#3f9e3f;font-style:italic;right:329.60px;">1.00 h</div>
<div class="t" style="top:213px;height:9px;line-height:9px;font-size:7.35px;color:#3f9e3f;font-style:italic;left:670.70px;">0.00</div>
<svg style="left:706.30px;top:216.25px;" width="1" height="1" viewBox="0 0 1 1"><g><path d="M-4.2 -2 L-2.6 -3.6 L2.6 -3.6 L2.6 4.7 L-4.2 4.7 Z" fill="#fff" stroke="#bdbdbd" stroke-width="0.8" stroke-linejoin="round"/><path d="M-0.6 3.2 L3.2 -3.9" stroke="#f0893a" stroke-width="2.2" stroke-linecap="round"/><path d="M-0.5 3 L3.1 -3.7" stroke="#fde3cc" stroke-width="0.7" stroke-linecap="round"/><path d="M-1.8 4.8 L-1.4 2.6 L0 3.6 Z" fill="#f0893a"/></g></svg>
<svg style="left:719.10px;top:216.45px;" width="1" height="1" viewBox="0 0 1 1"><circle cx="0" cy="-2.4" r="2.5" fill="#fff" stroke="#cfcfcf" stroke-width="0.8"/><path d="M0 0.2 L0 1.8 M-3.6 1.8 L3.6 1.8" fill="none" stroke="#cfcfcf" stroke-width="0.7"/><path d="M-4.6 4.3 L-3.6 2 L-2.6 4.3 Z M2.6 4.3 L3.6 2 L4.6 4.3 Z" fill="#cfcfcf"/></svg>
<svg style="left:743.90px;top:216.25px;" width="1" height="1" viewBox="0 0 1 1"><path d="M-4.3 -0.3 A4.3 4.3 0 0 1 2.67 -3.35" fill="none" stroke="#2fa58a" stroke-width="1.0" stroke-linecap="round"/><path d="M4.39 -4.82 L4.21 -1.38 L0.95 -2.15 Z" fill="#2fa58a"/><path d="M4.3 0.3 A4.3 4.3 0 0 1 -2.67 3.35" fill="none" stroke="#2fa58a" stroke-width="1.0" stroke-linecap="round"/><path d="M-4.39 4.82 L-4.21 1.38 L-0.95 2.15 Z" fill="#2fa58a"/></svg>
<svg style="left:768.70px;top:216.25px;" width="1" height="1" viewBox="0 0 1 1"><circle cx="0" cy="0" r="4.3" fill="#fff" stroke="#ee6a6f" stroke-width="0.85"/><path d="M-1.8059999999999998 0 L1.8059999999999998 0" stroke="#ee6a6f" stroke-width="1.2" stroke-linecap="round"/></svg>
<svg style="left:781.00px;top:216.25px;" width="1" height="1" viewBox="0 0 1 1"><rect x="-4.4" y="-4.5" width="8.8" height="6.6" rx="0.7" fill="#fff" stroke="#5c5c5c" stroke-width="0.95"/><path d="M0 2.3 L0 4 M-1.4 4.3 L1.4 4.3" stroke="#5c5c5c" stroke-width="1" stroke-linecap="butt"/></svg>
<svg style="left:800.70px;top:216.25px;" width="1" height="1" viewBox="0 0 1 1"><path d="M-1.7 -2.6 L-1.3 -4.8 L1.3 -4.8 L1.7 -2.6 M-1.7 2.6 L-1.3 4.8 L1.3 4.8 L1.7 2.6" fill="#eaf2fb" stroke="#67a4e4" stroke-width="0.8" stroke-linejoin="round"/><circle cx="0" cy="0" r="3" fill="#fff" stroke="#67a4e4" stroke-width="0.9"/><path d="M0 -1.5 L0 0.2 L1.1 0.2" fill="none" stroke="#67a4e4" stroke-width="0.7" stroke-linecap="round"/></svg>
<div style="left:482.10px;top:224.26px;width:329.60px;height:15.72px;background:#f8f8f8;"></div>
<div style="left:156.10px;top:224.26px;width:326.00px;height:15.72px;background:#fdf9e9;"></div>
<div style="left:156.10px;top:239.00px;width:326.00px;height:1.00px;background:#f1eedf;"></div>
<div style="left:482.10px;top:239.00px;width:329.60px;height:1.00px;background:#efefef;"></div>
<div class="t" style="top:228px;height:9px;line-height:9px;font-size:7.5px;color:#222;font-weight:bold;left:158.40px;letter-spacing:0.040px;">Working</div>
<div class="t" style="top:228px;height:9px;line-height:9px;font-size:7.35px;color:#444;left:358.90px;width:300px;text-align:center;">11.07.2016</div>
<div class="t" style="top:228px;height:9px;line-height:9px;font-size:7.35px;color:#444;left:404.30px;width:300px;text-align:center;">13:15</div>
<div class="t" style="top:228px;height:9px;line-height:9px;font-size:7.35px;color:#444;left:443.90px;width:300px;text-align:center;">17:30</div>
<div class="t" style="top:228px;height:9px;line-height:9px;font-size:7.35px;color:#3f9e3f;right:329.60px;">4.25 h</div>
<div class="t" style="top:228px;height:9px;line-height:9px;font-size:7.35px;color:#3f9e3f;left:670.70px;">0.00</div>
<svg style="left:706.30px;top:231.97px;" width="1" height="1" viewBox="0 0 1 1"><g><path d="M-4.2 -2 L-2.6 -3.6 L2.6 -3.6 L2.6 4.7 L-4.2 4.7 Z" fill="#fff" stroke="#bdbdbd" stroke-width="0.8" stroke-linejoin="round"/><path d="M-0.6 3.2 L3.2 -3.9" stroke="#f0893a" stroke-width="2.2" stroke-linecap="round"/><path d="M-0.5 3 L3.1 -3.7" stroke="#fde3cc" stroke-width="0.7" stroke-linecap="round"/><path d="M-1.8 4.8 L-1.4 2.6 L0 3.6 Z" fill="#f0893a"/></g></svg>
<svg style="left:719.10px;top:232.17px;" width="1" height="1" viewBox="0 0 1 1"><circle cx="0" cy="-2.4" r="2.5" fill="#fff" stroke="#cfcfcf" stroke-width="0.8"/><path d="M0 0.2 L0 1.8 M-3.6 1.8 L3.6 1.8" fill="none" stroke="#cfcfcf" stroke-width="0.7"/><path d="M-4.6 4.3 L-3.6 2 L-2.6 4.3 Z M2.6 4.3 L3.6 2 L4.6 4.3 Z" fill="#cfcfcf"/></svg>
<svg style="left:756.20px;top:231.97px;" width="1" height="1" viewBox="0 0 1 1"><circle cx="0" cy="0" r="4.35" fill="#fff" stroke="#8565c6" stroke-width="0.95"/><path d="M0.52 -2.87 L0.22 0.22 L-1.30 2.17" fill="none" stroke="#8565c6" stroke-width="0.81" stroke-linecap="round" stroke-linejoin="round"/><path d="M0.87 4.35 L4.26 1.22" stroke="#fff" stroke-width="2.6" stroke-linecap="butt"/><path d="M0.96 4.26 L4.13 1.30" stroke="#f6c234" stroke-width="1.7" stroke-linecap="round"/></svg>
<svg style="left:768.70px;top:231.97px;" width="1" height="1" viewBox="0 0 1 1"><circle cx="0" cy="0" r="4.3" fill="#fff" stroke="#ee6a6f" stroke-width="0.85"/><path d="M-1.8059999999999998 0 L1.8059999999999998 0" stroke="#ee6a6f" stroke-width="1.2" stroke-linecap="round"/></svg>
<svg style="left:781.00px;top:231.97px;" width="1" height="1" viewBox="0 0 1 1"><rect x="-4.4" y="-4.5" width="8.8" height="6.6" rx="0.7" fill="#fff" stroke="#5c5c5c" stroke-width="0.95"/><path d="M0 2.3 L0 4 M-1.4 4.3 L1.4 4.3" stroke="#5c5c5c" stroke-width="1" stroke-linecap="butt"/></svg>
<svg style="left:800.70px;top:231.97px;" width="1" height="1" viewBox="0 0 1 1"><path d="M-1.7 -2.6 L-1.3 -4.8 L1.3 -4.8 L1.7 -2.6 M-1.7 2.6 L-1.3 4.8 L1.3 4.8 L1.7 2.6" fill="#eaf2fb" stroke="#67a4e4" stroke-width="0.8" stroke-linejoin="round"/><circle cx="0" cy="0" r="3" fill="#fff" stroke="#67a4e4" stroke-width="0.9"/><path d="M0 -1.5 L0 0.2 L1.1 0.2" fill="none" stroke="#67a4e4" stroke-width="0.7" stroke-linecap="round"/></svg>
<div style="left:156.10px;top:239.98px;width:326.00px;height:16.00px;background:#fdf9e9;"></div>
<div style="left:482.10px;top:239.98px;width:329.60px;height:16.00px;background:#d7e6f5;"></div>
<div style="left:156.10px;top:239.48px;width:655.60px;height:1.00px;background:#c4c8cc;"></div>
<div class="t" style="top:245px;height:7px;line-height:7px;font-size:6.1px;color:#1f961f;font-weight:bold;right:330.40px;">8.50 h</div>
<svg style="left:162.65px;top:266.18px;" width="1" height="1" viewBox="0 0 1 1"><rect x="-3.5" y="-3.5" width="7" height="7" fill="#fff" stroke="#999" stroke-width="0.7"/><path d="M-2 0 L2 0" stroke="#777" stroke-width="0.7"/></svg>
<div class="t" style="top:261px;height:10px;line-height:10px;font-size:8.4px;color:#4e4e4e;left:170.30px;letter-spacing:0.118px;">Date: 12.07.2016 (4 Elements)</div>
<div style="left:482.10px;top:275.78px;width:329.60px;height:15.72px;background:#fff;"></div>
<div style="left:156.10px;top:275.78px;width:326.00px;height:15.72px;background:#fdf9e9;"></div>
<div style="left:156.10px;top:291.00px;width:326.00px;height:1.00px;background:#f1eedf;"></div>
<div style="left:482.10px;top:291.00px;width:329.60px;height:1.00px;background:#efefef;"></div>
<div class="t" style="top:280px;height:9px;line-height:9px;font-size:7.5px;color:#222;font-weight:bold;left:158.40px;letter-spacing:0.040px;">Working</div>
<div class="t" style="top:280px;height:9px;line-height:9px;font-size:7.35px;color:#444;left:358.90px;width:300px;text-align:center;">12.07.2016</div>
<div class="t" style="top:280px;height:9px;line-height:9px;font-size:7.35px;color:#444;left:404.30px;width:300px;text-align:center;">08:00</div>
<div class="t" style="top:280px;height:9px;line-height:9px;font-size:7.35px;color:#444;left:443.90px;width:300px;text-align:center;">12:12</div>
<div class="t" style="top:280px;height:9px;line-height:9px;font-size:7.35px;color:#3f9e3f;right:329.60px;">4.20 h</div>
<div class="t" style="top:280px;height:9px;line-height:9px;font-size:7.35px;color:#3f9e3f;left:670.70px;">0.00</div>
<svg style="left:706.30px;top:283.49px;" width="1" height="1" viewBox="0 0 1 1"><g><path d="M-4.2 -2 L-2.6 -3.6 L2.6 -3.6 L2.6 4.7 L-4.2 4.7 Z" fill="#fff" stroke="#bdbdbd" stroke-width="0.8" stroke-linejoin="round"/><path d="M-0.6 3.2 L3.2 -3.9" stroke="#f0893a" stroke-width="2.2" stroke-linecap="round"/><path d="M-0.5 3 L3.1 -3.7" stroke="#fde3cc" stroke-width="0.7" stroke-linecap="round"/><path d="M-1.8 4.8 L-1.4 2.6 L0 3.6 Z" fill="#f0893a"/></g></svg>
<svg style="left:719.10px;top:283.69px;" width="1" height="1" viewBox="0 0 1 1"><circle cx="0" cy="-2.4" r="2.5" fill="#fff" stroke="#cfcfcf" stroke-width="0.8"/><path d="M0 0.2 L0 1.8 M-3.6 1.8 L3.6 1.8" fill="none" stroke="#cfcfcf" stroke-width="0.7"/><path d="M-4.6 4.3 L-3.6 2 L-2.6 4.3 Z M2.6 4.3 L3.6 2 L4.6 4.3 Z" fill="#cfcfcf"/></svg>
<svg style="left:756.20px;top:283.49px;" width="1" height="1" viewBox="0 0 1 1"><circle cx="0" cy="0" r="4.35" fill="#fff" stroke="#8565c6" stroke-width="0.95"/><path d="M0.52 -2.87 L0.22 0.22 L-1.30 2.17" fill="none" stroke="#8565c6" stroke-width="0.81" stroke-linecap="round" stroke-linejoin="round"/><path d="M0.87 4.35 L4.26 1.22" stroke="#fff" stroke-width="2.6" stroke-linecap="butt"/><path d="M0.96 4.26 L4.13 1.30" stroke="#f6c234" stroke-width="1.7" stroke-linecap="round"/></svg>
<svg style="left:768.70px;top:283.49px;" width="1" height="1" viewBox="0 0 1 1"><circle cx="0" cy="0" r="4.3" fill="#fff" stroke="#ee6a6f" stroke-width="0.85"/><path d="M-1.8059999999999998 0 L1.8059999999999998 0" stroke="#ee6a6f" stroke-width="1.2" stroke-linecap="round"/></svg>
<svg style="left:781.00px;top:283.49px;" width="1" height="1" viewBox="0 0 1 1"><rect x="-4.4" y="-4.5" width="8.8" height="6.6" rx="0.7" fill="#fff" stroke="#5c5c5c" stroke-width="0.95"/><path d="M0 2.3 L0 4 M-1.4 4.3 L1.4 4.3" stroke="#5c5c5c" stroke-width="1" stroke-linecap="butt"/></svg>
<svg style="left:800.70px;top:283.49px;" width="1" height="1" viewBox="0 0 1 1"><path d="M-1.7 -2.6 L-1.3 -4.8 L1.3 -4.8 L1.7 -2.6 M-1.7 2.6 L-1.3 4.8 L1.3 4.8 L1.7 2.6" fill="#eaf2fb" stroke="#67a4e4" stroke-width="0.8" stroke-linejoin="round"/><circle cx="0" cy="0" r="3" fill="#fff" stroke="#67a4e4" stroke-width="0.9"/><path d="M0 -1.5 L0 0.2 L1.1 0.2" fill="none" stroke="#67a4e4" stroke-width="0.7" stroke-linecap="round"/></svg>
<div style="left:482.10px;top:291.50px;width:329.60px;height:15.72px;background:#f8f8f8;"></div>
<div style="left:156.10px;top:291.50px;width:326.00px;height:15.72px;background:#fdf9e9;"></div>
<div style="left:156.10px;top:306.00px;width:326.00px;height:1.00px;background:#f1eedf;"></div>
<div style="left:482.10px;top:306.00px;width:329.60px;height:1.00px;background:#efefef;"></div>
<div class="t" style="top:295px;height:9px;line-height:9px;font-size:7.5px;color:#8aa82a;font-weight:bold;font-style:italic;left:158.60px;letter-spacing:0.038px;">Break</div>
<div class="t" style="top:296px;height:9px;line-height:9px;font-size:7.35px;color:#8aa82a;font-style:italic;left:358.90px;width:300px;text-align:center;">12.07.2016</div>
<div class="t" style="top:296px;height:9px;line-height:9px;font-size:7.35px;color:#8aa82a;font-style:italic;left:404.30px;width:300px;text-align:center;">12:12</div>
<div class="t" style="top:296px;height:9px;line-height:9px;font-size:7.35px;color:#8aa82a;font-style:italic;left:443.90px;width:300px;text-align:center;">13:12</div>
<div class="t" style="top:296px;height:9px;line-height:9px;font-size:7.35px;color:#3f9e3f;font-style:italic;right:329.60px;">1.00 h</div>
<div class="t" style="top:296px;height:9px;line-height:9px;font-size:7.35px;color:#3f9e3f;font-style:italic;left:670.70px;">0.00</div>
<svg style="left:706.30px;top:299.21px;" width="1" height="1" viewBox="0 0 1 1"><g><path d="M-4.2 -2 L-2.6 -3.6 L2.6 -3.6 L2.6 4.7 L-4.2 4.7 Z" fill="#fff" stroke="#bdbdbd" stroke-width="0.8" stroke-linejoin="round"/><path d="M-0.6 3.2 L3.2 -3.9" stroke="#f0893a" stroke-width="2.2" stroke-linecap="round"/><path d="M-0.5 3 L3.1 -3.7" stroke="#fde3cc" stroke-width="0.7" stroke-linecap="round"/><path d="M-1.8 4.8 L-1.4 2.6 L0 3.6 Z" fill="#f0893a"/></g></svg>
<svg style="left:719.10px;top:299.41px;" width="1" height="1" viewBox="0 0 1 1"><circle cx="0" cy="-2.4" r="2.5" fill="#fff" stroke="#cfcfcf" stroke-width="0.8"/><path d="M0 0.2 L0 1.8 M-3.6 1.8 L3.6 1.8" fill="none" stroke="#cfcfcf" stroke-width="0.7"/><path d="M-4.6 4.3 L-3.6 2 L-2.6 4.3 Z M2.6 4.3 L3.6 2 L4.6 4.3 Z" fill="#cfcfcf"/></svg>
<svg style="left:743.90px;top:299.21px;" width="1" height="1" viewBox="0 0 1 1"><path d="M-4.3 -0.3 A4.3 4.3 0 0 1 2.67 -3.35" fill="none" stroke="#2fa58a" stroke-width="1.0" stroke-linecap="round"/><path d="M4.39 -4.82 L4.21 -1.38 L0.95 -2.15 Z" fill="#2fa58a"/><path d="M4.3 0.3 A4.3 4.3 0 0 1 -2.67 3.35" fill="none" stroke="#2fa58a" stroke-width="1.0" stroke-linecap="round"/><path d="M-4.39 4.82 L-4.21 1.38 L-0.95 2.15 Z" fill="#2fa58a"/></svg>
<svg style="left:768.70px;top:299.21px;" width="1" height="1" viewBox="0 0 1 1"><circle cx="0" cy="0" r="4.3" fill="#fff" stroke="#ee6a6f" stroke-width="0.85"/><path d="M-1.8059999999999998 0 L1.8059999999999998 0" stroke="#ee6a6f" stroke-width="1.2" stroke-linecap="round"/></svg>
<svg style="left:781.00px;top:299.21px;" width="1" height="1" viewBox="0 0 1 1"><rect x="-4.4" y="-4.5" width="8.8" height="6.6" rx="0.7" fill="#fff" stroke="#5c5c5c" stroke-width="0.95"/><path d="M0 2.3 L0 4 M-1.4 4.3 L1.4 4.3" stroke="#5c5c5c" stroke-width="1" stroke-linecap="butt"/></svg>
<svg style="left:800.70px;top:299.21px;" width="1" height="1" viewBox="0 0 1 1"><path d="M-1.7 -2.6 L-1.3 -4.8 L1.3 -4.8 L1.7 -2.6 M-1.7 2.6 L-1.3 4.8 L1.3 4.8 L1.7 2.6" fill="#eaf2fb" stroke="#67a4e4" stroke-width="0.8" stroke-linejoin="round"/><circle cx="0" cy="0" r="3" fill="#fff" stroke="#67a4e4" stroke-width="0.9"/><path d="M0 -1.5 L0 0.2 L1.1 0.2" fill="none" stroke="#67a4e4" stroke-width="0.7" stroke-linecap="round"/></svg>
<div style="left:482.10px;top:307.22px;width:329.60px;height:15.72px;background:#fff;"></div>
<div style="left:156.10px;top:307.22px;width:326.00px;height:15.72px;background:#fdf9e9;"></div>
<div style="left:156.10px;top:322.00px;width:326.00px;height:1.00px;background:#f1eedf;"></div>
<div style="left:482.10px;top:322.00px;width:329.60px;height:1.00px;background:#efefef;"></div>
<div class="t" style="top:311px;height:9px;line-height:9px;font-size:7.5px;color:#222;font-weight:bold;left:158.40px;letter-spacing:0.040px;">Working</div>
<div class="t" style="top:311px;height:9px;line-height:9px;font-size:7.35px;color:#444;left:358.90px;width:300px;text-align:center;">12.07.2016</div>
<div class="t" style="top:311px;height:9px;line-height:9px;font-size:7.35px;color:#444;left:404.30px;width:300px;text-align:center;">13:12</div>
<div class="t" style="top:311px;height:9px;line-height:9px;font-size:7.35px;color:#444;left:443.90px;width:300px;text-align:center;">14:00</div>
<div class="t" style="top:311px;height:9px;line-height:9px;font-size:7.35px;color:#3f9e3f;right:329.60px;">0.80 h</div>
<div class="t" style="top:311px;height:9px;line-height:9px;font-size:7.35px;color:#3f9e3f;left:670.70px;">0.00</div>
<svg style="left:706.30px;top:314.93px;" width="1" height="1" viewBox="0 0 1 1"><g><path d="M-4.2 -2 L-2.6 -3.6 L2.6 -3.6 L2.6 4.7 L-4.2 4.7 Z" fill="#fff" stroke="#bdbdbd" stroke-width="0.8" stroke-linejoin="round"/><path d="M-0.6 3.2 L3.2 -3.9" stroke="#f0893a" stroke-width="2.2" stroke-linecap="round"/><path d="M-0.5 3 L3.1 -3.7" stroke="#fde3cc" stroke-width="0.7" stroke-linecap="round"/><path d="M-1.8 4.8 L-1.4 2.6 L0 3.6 Z" fill="#f0893a"/></g></svg>
<svg style="left:719.10px;top:315.13px;" width="1" height="1" viewBox="0 0 1 1"><circle cx="0" cy="-2.4" r="2.5" fill="#fff" stroke="#cfcfcf" stroke-width="0.8"/><path d="M0 0.2 L0 1.8 M-3.6 1.8 L3.6 1.8" fill="none" stroke="#cfcfcf" stroke-width="0.7"/><path d="M-4.6 4.3 L-3.6 2 L-2.6 4.3 Z M2.6 4.3 L3.6 2 L4.6 4.3 Z" fill="#cfcfcf"/></svg>
<svg style="left:743.90px;top:314.93px;" width="1" height="1" viewBox="0 0 1 1"><path d="M-4.3 -0.3 A4.3 4.3 0 0 1 2.67 -3.35" fill="none" stroke="#2fa58a" stroke-width="1.0" stroke-linecap="round"/><path d="M4.39 -4.82 L4.21 -1.38 L0.95 -2.15 Z" fill="#2fa58a"/><path d="M4.3 0.3 A4.3 4.3 0 0 1 -2.67 3.35" fill="none" stroke="#2fa58a" stroke-width="1.0" stroke-linecap="round"/><path d="M-4.39 4.82 L-4.21 1.38 L-0.95 2.15 Z" fill="#2fa58a"/></svg>
<svg style="left:756.20px;top:314.93px;" width="1" height="1" viewBox="0 0 1 1"><circle cx="0" cy="0" r="4.35" fill="#fff" stroke="#8565c6" stroke-width="0.95"/><path d="M0.52 -2.87 L0.22 0.22 L-1.30 2.17" fill="none" stroke="#8565c6" stroke-width="0.81" stroke-linecap="round" stroke-linejoin="round"/><path d="M0.87 4.35 L4.26 1.22" stroke="#fff" stroke-width="2.6" stroke-linecap="butt"/><path d="M0.96 4.26 L4.13 1.30" stroke="#f6c234" stroke-width="1.7" stroke-linecap="round"/></svg>
<svg style="left:768.70px;top:314.93px;" width="1" height="1" viewBox="0 0 1 1"><circle cx="0" cy="0" r="4.3" fill="#fff" stroke="#ee6a6f" stroke-width="0.85"/><path d="M-1.8059999999999998 0 L1.8059999999999998 0" stroke="#ee6a6f" stroke-width="1.2" stroke-linecap="round"/></svg>
<svg style="left:781.00px;top:314.93px;" width="1" height="1" viewBox="0 0 1 1"><rect x="-4.4" y="-4.5" width="8.8" height="6.6" rx="0.7" fill="#fff" stroke="#5c5c5c" stroke-width="0.95"/><path d="M0 2.3 L0 4 M-1.4 4.3 L1.4 4.3" stroke="#5c5c5c" stroke-width="1" stroke-linecap="butt"/></svg>
<svg style="left:800.70px;top:314.93px;" width="1" height="1" viewBox="0 0 1 1"><path d="M-1.7 -2.6 L-1.3 -4.8 L1.3 -4.8 L1.7 -2.6 M-1.7 2.6 L-1.3 4.8 L1.3 4.8 L1.7 2.6" fill="#eaf2fb" stroke="#67a4e4" stroke-width="0.8" stroke-linejoin="round"/><circle cx="0" cy="0" r="3" fill="#fff" stroke="#67a4e4" stroke-width="0.9"/><path d="M0 -1.5 L0 0.2 L1.1 0.2" fill="none" stroke="#67a4e4" stroke-width="0.7" stroke-linecap="round"/></svg>
<div style="left:482.10px;top:322.94px;width:329.60px;height:15.72px;background:#f8f8f8;"></div>
<div style="left:156.10px;top:322.94px;width:326.00px;height:15.72px;background:#fdf9e9;"></div>
<div style="left:156.10px;top:338.00px;width:326.00px;height:1.00px;background:#f1eedf;"></div>
<div style="left:482.10px;top:338.00px;width:329.60px;height:1.00px;background:#efefef;"></div>
<div class="t" style="top:327px;height:9px;line-height:9px;font-size:7.5px;color:#222;font-weight:bold;left:158.40px;letter-spacing:0.040px;">Working</div>
<div class="t" style="top:327px;height:9px;line-height:9px;font-size:7.35px;color:#444;left:358.90px;width:300px;text-align:center;">12.07.2016</div>
<div class="t" style="top:327px;height:9px;line-height:9px;font-size:7.35px;color:#444;left:404.30px;width:300px;text-align:center;">14:00</div>
<div class="t" style="top:327px;height:9px;line-height:9px;font-size:7.35px;color:#444;left:443.90px;width:300px;text-align:center;">17:24</div>
<div class="t" style="top:327px;height:9px;line-height:9px;font-size:7.35px;color:#3f9e3f;right:329.60px;">3.40 h</div>
<div class="t" style="top:327px;height:9px;line-height:9px;font-size:7.35px;color:#3f9e3f;left:670.70px;">0.00</div>
<svg style="left:706.30px;top:330.65px;" width="1" height="1" viewBox="0 0 1 1"><g><path d="M-4.2 -2 L-2.6 -3.6 L2.6 -3.6 L2.6 4.7 L-4.2 4.7 Z" fill="#fff" stroke="#bdbdbd" stroke-width="0.8" stroke-linejoin="round"/><path d="M-0.6 3.2 L3.2 -3.9" stroke="#f0893a" stroke-width="2.2" stroke-linecap="round"/><path d="M-0.5 3 L3.1 -3.7" stroke="#fde3cc" stroke-width="0.7" stroke-linecap="round"/><path d="M-1.8 4.8 L-1.4 2.6 L0 3.6 Z" fill="#f0893a"/></g></svg>
<svg style="left:719.10px;top:330.85px;" width="1" height="1" viewBox="0 0 1 1"><circle cx="0" cy="-2.4" r="2.5" fill="#fff" stroke="#cfcfcf" stroke-width="0.8"/><path d="M0 0.2 L0 1.8 M-3.6 1.8 L3.6 1.8" fill="none" stroke="#cfcfcf" stroke-width="0.7"/><path d="M-4.6 4.3 L-3.6 2 L-2.6 4.3 Z M2.6 4.3 L3.6 2 L4.6 4.3 Z" fill="#cfcfcf"/></svg>
<svg style="left:743.90px;top:330.65px;" width="1" height="1" viewBox="0 0 1 1"><path d="M-4.3 -0.3 A4.3 4.3 0 0 1 2.67 -3.35" fill="none" stroke="#2fa58a" stroke-width="1.0" stroke-linecap="round"/><path d="M4.39 -4.82 L4.21 -1.38 L0.95 -2.15 Z" fill="#2fa58a"/><path d="M4.3 0.3 A4.3 4.3 0 0 1 -2.67 3.35" fill="none" stroke="#2fa58a" stroke-width="1.0" stroke-linecap="round"/><path d="M-4.39 4.82 L-4.21 1.38 L-0.95 2.15 Z" fill="#2fa58a"/></svg>
<svg style="left:756.20px;top:330.65px;" width="1" height="1" viewBox="0 0 1 1"><circle cx="0" cy="0" r="4.35" fill="#fff" stroke="#8565c6" stroke-width="0.95"/><path d="M0.52 -2.87 L0.22 0.22 L-1.30 2.17" fill="none" stroke="#8565c6" stroke-width="0.81" stroke-linecap="round" stroke-linejoin="round"/><path d="M0.87 4.35 L4.26 1.22" stroke="#fff" stroke-width="2.6" stroke-linecap="butt"/><path d="M0.96 4.26 L4.13 1.30" stroke="#f6c234" stroke-width="1.7" stroke-linecap="round"/></svg>
<svg style="left:768.70px;top:330.65px;" width="1" height="1" viewBox="0 0 1 1"><circle cx="0" cy="0" r="4.3" fill="#fff" stroke="#ee6a6f" stroke-width="0.85"/><path d="M-1.8059999999999998 0 L1.8059999999999998 0" stroke="#ee6a6f" stroke-width="1.2" stroke-linecap="round"/></svg>
<svg style="left:781.00px;top:330.65px;" width="1" height="1" viewBox="0 0 1 1"><rect x="-4.4" y="-4.5" width="8.8" height="6.6" rx="0.7" fill="#fff" stroke="#5c5c5c" stroke-width="0.95"/><path d="M0 2.3 L0 4 M-1.4 4.3 L1.4 4.3" stroke="#5c5c5c" stroke-width="1" stroke-linecap="butt"/></svg>
<svg style="left:800.70px;top:330.65px;" width="1" height="1" viewBox="0 0 1 1"><path d="M-1.7 -2.6 L-1.3 -4.8 L1.3 -4.8 L1.7 -2.6 M-1.7 2.6 L-1.3 4.8 L1.3 4.8 L1.7 2.6" fill="#eaf2fb" stroke="#67a4e4" stroke-width="0.8" stroke-linejoin="round"/><circle cx="0" cy="0" r="3" fill="#fff" stroke="#67a4e4" stroke-width="0.9"/><path d="M0 -1.5 L0 0.2 L1.1 0.2" fill="none" stroke="#67a4e4" stroke-width="0.7" stroke-linecap="round"/></svg>
<div style="left:156.10px;top:338.66px;width:326.00px;height:16.00px;background:#fdf9e9;"></div>
<div style="left:482.10px;top:338.66px;width:329.60px;height:16.00px;background:#d7e6f5;"></div>
<div style="left:156.10px;top:338.16px;width:655.60px;height:1.00px;background:#c4c8cc;"></div>
<div class="t" style="top:344px;height:7px;line-height:7px;font-size:6.1px;color:#1f961f;font-weight:bold;right:330.40px;">8.40 h</div>
<svg style="left:162.65px;top:364.86px;" width="1" height="1" viewBox="0 0 1 1"><rect x="-3.5" y="-3.5" width="7" height="7" fill="#fff" stroke="#999" stroke-width="0.7"/><path d="M-2 0 L2 0" stroke="#777" stroke-width="0.7"/></svg>
<div class="t" style="top:360px;height:10px;line-height:10px;font-size:8.4px;color:#4e4e4e;left:170.30px;letter-spacing:0.118px;">Date: 13.07.2016 (4 Elements)</div>
<div style="left:482.10px;top:374.46px;width:329.60px;height:15.72px;background:#fff;"></div>
<div style="left:156.10px;top:374.46px;width:326.00px;height:15.72px;background:#fdf9e9;"></div>
<div style="left:156.10px;top:389.00px;width:326.00px;height:1.00px;background:#f1eedf;"></div>
<div style="left:482.10px;top:389.00px;width:329.60px;height:1.00px;background:#efefef;"></div>
<div class="t" style="top:378px;height:9px;line-height:9px;font-size:7.5px;color:#222;font-weight:bold;left:158.40px;letter-spacing:0.040px;">Working</div>
<div class="t" style="top:379px;height:9px;line-height:9px;font-size:7.35px;color:#444;left:358.90px;width:300px;text-align:center;">13.07.2016</div>
<div class="t" style="top:379px;height:9px;line-height:9px;font-size:7.35px;color:#444;left:404.30px;width:300px;text-align:center;">08:00</div>
<div class="t" style="top:379px;height:9px;line-height:9px;font-size:7.35px;color:#444;left:443.90px;width:300px;text-align:center;">12:30</div>
<div class="t" style="top:379px;height:9px;line-height:9px;font-size:7.35px;color:#3f9e3f;right:329.60px;">4.50 h</div>
<div class="t" style="top:379px;height:9px;line-height:9px;font-size:7.35px;color:#3f9e3f;left:670.70px;">0.00</div>
<svg style="left:706.30px;top:382.17px;" width="1" height="1" viewBox="0 0 1 1"><g><path d="M-4.2 -2 L-2.6 -3.6 L2.6 -3.6 L2.6 4.7 L-4.2 4.7 Z" fill="#fff" stroke="#bdbdbd" stroke-width="0.8" stroke-linejoin="round"/><path d="M-0.6 3.2 L3.2 -3.9" stroke="#f0893a" stroke-width="2.2" stroke-linecap="round"/><path d="M-0.5 3 L3.1 -3.7" stroke="#fde3cc" stroke-width="0.7" stroke-linecap="round"/><path d="M-1.8 4.8 L-1.4 2.6 L0 3.6 Z" fill="#f0893a"/></g></svg>
<svg style="left:719.10px;top:382.37px;" width="1" height="1" viewBox="0 0 1 1"><circle cx="0" cy="-2.4" r="2.5" fill="#fff" stroke="#cfcfcf" stroke-width="0.8"/><path d="M0 0.2 L0 1.8 M-3.6 1.8 L3.6 1.8" fill="none" stroke="#cfcfcf" stroke-width="0.7"/><path d="M-4.6 4.3 L-3.6 2 L-2.6 4.3 Z M2.6 4.3 L3.6 2 L4.6 4.3 Z" fill="#cfcfcf"/></svg>
<svg style="left:743.90px;top:382.17px;" width="1" height="1" viewBox="0 0 1 1"><path d="M-4.3 -0.3 A4.3 4.3 0 0 1 2.67 -3.35" fill="none" stroke="#2fa58a" stroke-width="1.0" stroke-linecap="round"/><path d="M4.39 -4.82 L4.21 -1.38 L0.95 -2.15 Z" fill="#2fa58a"/><path d="M4.3 0.3 A4.3 4.3 0 0 1 -2.67 3.35" fill="none" stroke="#2fa58a" stroke-width="1.0" stroke-linecap="round"/><path d="M-4.39 4.82 L-4.21 1.38 L-0.95 2.15 Z" fill="#2fa58a"/></svg>
<svg style="left:756.20px;top:382.17px;" width="1" height="1" viewBox="0 0 1 1"><circle cx="0" cy="0" r="4.35" fill="#fff" stroke="#8565c6" stroke-width="0.95"/><path d="M0.52 -2.87 L0.22 0.22 L-1.30 2.17" fill="none" stroke="#8565c6" stroke-width="0.81" stroke-linecap="round" stroke-linejoin="round"/><path d="M0.87 4.35 L4.26 1.22" stroke="#fff" stroke-width="2.6" stroke-linecap="butt"/><path d="M0.96 4.26 L4.13 1.30" stroke="#f6c234" stroke-width="1.7" stroke-linecap="round"/></svg>
<svg style="left:768.70px;top:382.17px;" width="1" height="1" viewBox="0 0 1 1"><circle cx="0" cy="0" r="4.3" fill="#fff" stroke="#ee6a6f" stroke-width="0.85"/><path d="M-1.8059999999999998 0 L1.8059999999999998 0" stroke="#ee6a6f" stroke-width="1.2" stroke-linecap="round"/></svg>
<svg style="left:781.00px;top:382.17px;" width="1" height="1" viewBox="0 0 1 1"><rect x="-4.4" y="-4.5" width="8.8" height="6.6" rx="0.7" fill="#fff" stroke="#5c5c5c" stroke-width="0.95"/><path d="M0 2.3 L0 4 M-1.4 4.3 L1.4 4.3" stroke="#5c5c5c" stroke-width="1" stroke-linecap="butt"/></svg>
<svg style="left:800.70px;top:382.17px;" width="1" height="1" viewBox="0 0 1 1"><path d="M-1.7 -2.6 L-1.3 -4.8 L1.3 -4.8 L1.7 -2.6 M-1.7 2.6 L-1.3 4.8 L1.3 4.8 L1.7 2.6" fill="#eaf2fb" stroke="#67a4e4" stroke-width="0.8" stroke-linejoin="round"/><circle cx="0" cy="0" r="3" fill="#fff" stroke="#67a4e4" stroke-width="0.9"/><path d="M0 -1.5 L0 0.2 L1.1 0.2" fill="none" stroke="#67a4e4" stroke-width="0.7" stroke-linecap="round"/></svg>
<div style="left:482.10px;top:390.18px;width:329.60px;height:15.72px;background:#f8f8f8;"></div>
<div style="left:156.10px;top:390.18px;width:326.00px;height:15.72px;background:#fdf9e9;"></div>
<div style="left:156.10px;top:405.00px;width:326.00px;height:1.00px;background:#f1eedf;"></div>
<div style="left:482.10px;top:405.00px;width:329.60px;height:1.00px;background:#efefef;"></div>
<div class="t" style="top:394px;height:9px;line-height:9px;font-size:7.5px;color:#222;font-weight:bold;left:158.40px;letter-spacing:0.040px;">Working</div>
<div class="t" style="top:394px;height:9px;line-height:9px;font-size:7.35px;color:#444;left:358.90px;width:300px;text-align:center;">13.07.2016</div>
<div class="t" style="top:394px;height:9px;line-height:9px;font-size:7.35px;color:#444;left:404.30px;width:300px;text-align:center;">12:30</div>
<div class="t" style="top:394px;height:9px;line-height:9px;font-size:7.35px;color:#444;left:443.90px;width:300px;text-align:center;">12:45</div>
<div class="t" style="top:394px;height:9px;line-height:9px;font-size:7.35px;color:#3f9e3f;right:329.60px;">0.25 h</div>
<div class="t" style="top:394px;height:9px;line-height:9px;font-size:7.35px;color:#3f9e3f;left:670.70px;">0.00</div>
<svg style="left:706.30px;top:397.89px;" width="1" height="1" viewBox="0 0 1 1"><g><path d="M-4.2 -2 L-2.6 -3.6 L2.6 -3.6 L2.6 4.7 L-4.2 4.7 Z" fill="#fff" stroke="#bdbdbd" stroke-width="0.8" stroke-linejoin="round"/><path d="M-0.6 3.2 L3.2 -3.9" stroke="#f0893a" stroke-width="2.2" stroke-linecap="round"/><path d="M-0.5 3 L3.1 -3.7" stroke="#fde3cc" stroke-width="0.7" stroke-linecap="round"/><path d="M-1.8 4.8 L-1.4 2.6 L0 3.6 Z" fill="#f0893a"/></g></svg>
<svg style="left:719.10px;top:398.09px;" width="1" height="1" viewBox="0 0 1 1"><circle cx="0" cy="-2.4" r="2.5" fill="#fff" stroke="#cfcfcf" stroke-width="0.8"/><path d="M0 0.2 L0 1.8 M-3.6 1.8 L3.6 1.8" fill="none" stroke="#cfcfcf" stroke-width="0.7"/><path d="M-4.6 4.3 L-3.6 2 L-2.6 4.3 Z M2.6 4.3 L3.6 2 L4.6 4.3 Z" fill="#cfcfcf"/></svg>
<svg style="left:743.90px;top:397.89px;" width="1" height="1" viewBox="0 0 1 1"><path d="M-4.3 -0.3 A4.3 4.3 0 0 1 2.67 -3.35" fill="none" stroke="#2fa58a" stroke-width="1.0" stroke-linecap="round"/><path d="M4.39 -4.82 L4.21 -1.38 L0.95 -2.15 Z" fill="#2fa58a"/><path d="M4.3 0.3 A4.3 4.3 0 0 1 -2.67 3.35" fill="none" stroke="#2fa58a" stroke-width="1.0" stroke-linecap="round"/><path d="M-4.39 4.82 L-4.21 1.38 L-0.95 2.15 Z" fill="#2fa58a"/></svg>
<svg style="left:756.20px;top:397.89px;" width="1" height="1" viewBox="0 0 1 1"><circle cx="0" cy="0" r="4.35" fill="#fff" stroke="#8565c6" stroke-width="0.95"/><path d="M0.52 -2.87 L0.22 0.22 L-1.30 2.17" fill="none" stroke="#8565c6" stroke-width="0.81" stroke-linecap="round" stroke-linejoin="round"/><path d="M0.87 4.35 L4.26 1.22" stroke="#fff" stroke-width="2.6" stroke-linecap="butt"/><path d="M0.96 4.26 L4.13 1.30" stroke="#f6c234" stroke-width="1.7" stroke-linecap="round"/></svg>
<svg style="left:768.70px;top:397.89px;" width="1" height="1" viewBox="0 0 1 1"><circle cx="0" cy="0" r="4.3" fill="#fff" stroke="#ee6a6f" stroke-width="0.85"/><path d="M-1.8059999999999998 0 L1.8059999999999998 0" stroke="#ee6a6f" stroke-width="1.2" stroke-linecap="round"/></svg>
<svg style="left:781.00px;top:397.89px;" width="1" height="1" viewBox="0 0 1 1"><rect x="-4.4" y="-4.5" width="8.8" height="6.6" rx="0.7" fill="#fff" stroke="#5c5c5c" stroke-width="0.95"/><path d="M0 2.3 L0 4 M-1.4 4.3 L1.4 4.3" stroke="#5c5c5c" stroke-width="1" stroke-linecap="butt"/></svg>
<svg style="left:800.70px;top:397.89px;" width="1" height="1" viewBox="0 0 1 1"><path d="M-1.7 -2.6 L-1.3 -4.8 L1.3 -4.8 L1.7 -2.6 M-1.7 2.6 L-1.3 4.8 L1.3 4.8 L1.7 2.6" fill="#eaf2fb" stroke="#67a4e4" stroke-width="0.8" stroke-linejoin="round"/><circle cx="0" cy="0" r="3" fill="#fff" stroke="#67a4e4" stroke-width="0.9"/><path d="M0 -1.5 L0 0.2 L1.1 0.2" fill="none" stroke="#67a4e4" stroke-width="0.7" stroke-linecap="round"/></svg>
<div style="left:482.10px;top:405.90px;width:329.60px;height:15.72px;background:#fff;"></div>
<div style="left:156.10px;top:405.90px;width:326.00px;height:15.72px;background:#fdf9e9;"></div>
<div style="left:156.10px;top:421.00px;width:326.00px;height:1.00px;background:#f1eedf;"></div>
<div style="left:482.10px;top:421.00px;width:329.60px;height:1.00px;background:#efefef;"></div>
<div class="t" style="top:410px;height:9px;line-height:9px;font-size:7.5px;color:#8aa82a;font-weight:bold;font-style:italic;left:158.60px;letter-spacing:0.038px;">Break</div>
<div class="t" style="top:410px;height:9px;line-height:9px;font-size:7.35px;color:#8aa82a;font-style:italic;left:358.90px;width:300px;text-align:center;">13.07.2016</div>
<div class="t" style="top:410px;height:9px;line-height:9px;font-size:7.35px;color:#8aa82a;font-style:italic;left:404.30px;width:300px;text-align:center;">12:45</div>
<div class="t" style="top:410px;height:9px;line-height:9px;font-size:7.35px;color:#8aa82a;font-style:italic;left:443.90px;width:300px;text-align:center;">13:45</div>
<div class="t" style="top:410px;height:9px;line-height:9px;font-size:7.35px;color:#3f9e3f;font-style:italic;right:329.60px;">1.00 h</div>
<div class="t" style="top:410px;height:9px;line-height:9px;font-size:7.35px;color:#3f9e3f;font-style:italic;left:670.70px;">0.00</div>
<svg style="left:706.30px;top:413.61px;" width="1" height="1" viewBox="0 0 1 1"><g><path d="M-4.2 -2 L-2.6 -3.6 L2.6 -3.6 L2.6 4.7 L-4.2 4.7 Z" fill="#fff" stroke="#bdbdbd" stroke-width="0.8" stroke-linejoin="round"/><path d="M-0.6 3.2 L3.2 -3.9" stroke="#f0893a" stroke-width="2.2" stroke-linecap="round"/><path d="M-0.5 3 L3.1 -3.7" stroke="#fde3cc" stroke-width="0.7" stroke-linecap="round"/><path d="M-1.8 4.8 L-1.4 2.6 L0 3.6 Z" fill="#f0893a"/></g></svg>
<svg style="left:719.10px;top:413.81px;" width="1" height="1" viewBox="0 0 1 1"><circle cx="0" cy="-2.4" r="2.5" fill="#fff" stroke="#cfcfcf" stroke-width="0.8"/><path d="M0 0.2 L0 1.8 M-3.6 1.8 L3.6 1.8" fill="none" stroke="#cfcfcf" stroke-width="0.7"/><path d="M-4.6 4.3 L-3.6 2 L-2.6 4.3 Z M2.6 4.3 L3.6 2 L4.6 4.3 Z" fill="#cfcfcf"/></svg>
<svg style="left:743.90px;top:413.61px;" width="1" height="1" viewBox="0 0 1 1"><path d="M-4.3 -0.3 A4.3 4.3 0 0 1 2.67 -3.35" fill="none" stroke="#2fa58a" stroke-width="1.0" stroke-linecap="round"/><path d="M4.39 -4.82 L4.21 -1.38 L0.95 -2.15 Z" fill="#2fa58a"/><path d="M4.3 0.3 A4.3 4.3 0 0 1 -2.67 3.35" fill="none" stroke="#2fa58a" stroke-width="1.0" stroke-linecap="round"/><path d="M-4.39 4.82 L-4.21 1.38 L-0.95 2.15 Z" fill="#2fa58a"/></svg>
<svg style="left:768.70px;top:413.61px;" width="1" height="1" viewBox="0 0 1 1"><circle cx="0" cy="0" r="4.3" fill="#fff" stroke="#ee6a6f" stroke-width="0.85"/><path d="M-1.8059999999999998 0 L1.8059999999999998 0" stroke="#ee6a6f" stroke-width="1.2" stroke-linecap="round"/></svg>
<svg style="left:781.00px;top:413.61px;" width="1" height="1" viewBox="0 0 1 1"><rect x="-4.4" y="-4.5" width="8.8" height="6.6" rx="0.7" fill="#fff" stroke="#5c5c5c" stroke-width="0.95"/><path d="M0 2.3 L0 4 M-1.4 4.3 L1.4 4.3" stroke="#5c5c5c" stroke-width="1" stroke-linecap="butt"/></svg>
<svg style="left:800.70px;top:413.61px;" width="1" height="1" viewBox="0 0 1 1"><path d="M-1.7 -2.6 L-1.3 -4.8 L1.3 -4.8 L1.7 -2.6 M-1.7 2.6 L-1.3 4.8 L1.3 4.8 L1.7 2.6" fill="#eaf2fb" stroke="#67a4e4" stroke-width="0.8" stroke-linejoin="round"/><circle cx="0" cy="0" r="3" fill="#fff" stroke="#67a4e4" stroke-width="0.9"/><path d="M0 -1.5 L0 0.2 L1.1 0.2" fill="none" stroke="#67a4e4" stroke-width="0.7" stroke-linecap="round"/></svg>
<div style="left:482.10px;top:421.62px;width:329.60px;height:15.72px;background:#f8f8f8;"></div>
<div style="left:156.10px;top:421.62px;width:326.00px;height:15.72px;background:#fdf9e9;"></div>
<div style="left:156.10px;top:436.00px;width:326.00px;height:1.00px;background:#f1eedf;"></div>
<div style="left:482.10px;top:436.00px;width:329.60px;height:1.00px;background:#efefef;"></div>
<div class="t" style="top:426px;height:9px;line-height:9px;font-size:7.5px;color:#222;font-weight:bold;left:158.40px;letter-spacing:0.040px;">Working</div>
<div class="t" style="top:426px;height:9px;line-height:9px;font-size:7.35px;color:#444;left:358.90px;width:300px;text-align:center;">13.07.2016</div>
<div class="t" style="top:426px;height:9px;line-height:9px;font-size:7.35px;color:#444;left:404.30px;width:300px;text-align:center;">13:45</div>
<div class="t" style="top:426px;height:9px;line-height:9px;font-size:7.35px;color:#444;left:443.90px;width:300px;text-align:center;">18:30</div>
<div class="t" style="top:426px;height:9px;line-height:9px;font-size:7.35px;color:#3f9e3f;right:329.60px;">4.75 h</div>
<div class="t" style="top:426px;height:9px;line-height:9px;font-size:7.35px;color:#3f9e3f;left:670.70px;">0.00</div>
<svg style="left:706.30px;top:429.33px;" width="1" height="1" viewBox="0 0 1 1"><g><path d="M-4.2 -2 L-2.6 -3.6 L2.6 -3.6 L2.6 4.7 L-4.2 4.7 Z" fill="#fff" stroke="#bdbdbd" stroke-width="0.8" stroke-linejoin="round"/><path d="M-0.6 3.2 L3.2 -3.9" stroke="#f0893a" stroke-width="2.2" stroke-linecap="round"/><path d="M-0.5 3 L3.1 -3.7" stroke="#fde3cc" stroke-width="0.7" stroke-linecap="round"/><path d="M-1.8 4.8 L-1.4 2.6 L0 3.6 Z" fill="#f0893a"/></g></svg>
<svg style="left:719.10px;top:429.53px;" width="1" height="1" viewBox="0 0 1 1"><circle cx="0" cy="-2.4" r="2.5" fill="#fff" stroke="#cfcfcf" stroke-width="0.8"/><path d="M0 0.2 L0 1.8 M-3.6 1.8 L3.6 1.8" fill="none" stroke="#cfcfcf" stroke-width="0.7"/><path d="M-4.6 4.3 L-3.6 2 L-2.6 4.3 Z M2.6 4.3 L3.6 2 L4.6 4.3 Z" fill="#cfcfcf"/></svg>
<svg style="left:756.20px;top:429.33px;" width="1" height="1" viewBox="0 0 1 1"><circle cx="0" cy="0" r="4.35" fill="#fff" stroke="#8565c6" stroke-width="0.95"/><path d="M0.52 -2.87 L0.22 0.22 L-1.30 2.17" fill="none" stroke="#8565c6" stroke-width="0.81" stroke-linecap="round" stroke-linejoin="round"/><path d="M0.87 4.35 L4.26 1.22" stroke="#fff" stroke-width="2.6" stroke-linecap="butt"/><path d="M0.96 4.26 L4.13 1.30" stroke="#f6c234" stroke-width="1.7" stroke-linecap="round"/></svg>
<svg style="left:768.70px;top:429.33px;" width="1" height="1" viewBox="0 0 1 1"><circle cx="0" cy="0" r="4.3" fill="#fff" stroke="#ee6a6f" stroke-width="0.85"/><path d="M-1.8059999999999998 0 L1.8059999999999998 0" stroke="#ee6a6f" stroke-width="1.2" stroke-linecap="round"/></svg>
<svg style="left:781.00px;top:429.33px;" width="1" height="1" viewBox="0 0 1 1"><rect x="-4.4" y="-4.5" width="8.8" height="6.6" rx="0.7" fill="#fff" stroke="#5c5c5c" stroke-width="0.95"/><path d="M0 2.3 L0 4 M-1.4 4.3 L1.4 4.3" stroke="#5c5c5c" stroke-width="1" stroke-linecap="butt"/></svg>
<svg style="left:800.70px;top:429.33px;" width="1" height="1" viewBox="0 0 1 1"><path d="M-1.7 -2.6 L-1.3 -4.8 L1.3 -4.8 L1.7 -2.6 M-1.7 2.6 L-1.3 4.8 L1.3 4.8 L1.7 2.6" fill="#eaf2fb" stroke="#67a4e4" stroke-width="0.8" stroke-linejoin="round"/><circle cx="0" cy="0" r="3" fill="#fff" stroke="#67a4e4" stroke-width="0.9"/><path d="M0 -1.5 L0 0.2 L1.1 0.2" fill="none" stroke="#67a4e4" stroke-width="0.7" stroke-linecap="round"/></svg>
<div style="left:156.10px;top:437.34px;width:326.00px;height:16.00px;background:#fdf9e9;"></div>
<div style="left:482.10px;top:437.34px;width:329.60px;height:16.00px;background:#d7e6f5;"></div>
<div style="left:156.10px;top:436.84px;width:655.60px;height:1.00px;background:#c4c8cc;"></div>
<div class="t" style="top:442px;height:7px;line-height:7px;font-size:6.1px;color:#1f961f;font-weight:bold;right:330.40px;">9.50 h</div>
<svg style="left:162.65px;top:463.54px;" width="1" height="1" viewBox="0 0 1 1"><rect x="-3.5" y="-3.5" width="7" height="7" fill="#fff" stroke="#999" stroke-width="0.7"/><path d="M-2 0 L2 0" stroke="#777" stroke-width="0.7"/></svg>
<div class="t" style="top:458px;height:10px;line-height:10px;font-size:8.4px;color:#4e4e4e;left:170.30px;letter-spacing:0.118px;">Date: 14.07.2016 (1 Element)</div>
<div style="left:482.10px;top:473.14px;width:329.60px;height:15.72px;background:#fff;"></div>
<div style="left:156.10px;top:473.14px;width:326.00px;height:15.72px;background:#fdf9e9;"></div>
<div style="left:156.10px;top:488.00px;width:326.00px;height:1.00px;background:#f1eedf;"></div>
<div style="left:482.10px;top:488.00px;width:329.60px;height:1.00px;background:#efefef;"></div>
<div class="t" style="top:477px;height:9px;line-height:9px;font-size:7.5px;color:#222;font-weight:bold;left:158.40px;letter-spacing:0.097px;">Presentation</div>
<div class="t" style="top:477px;height:9px;line-height:9px;font-size:7.35px;color:#444;left:358.90px;width:300px;text-align:center;">14.07.2016</div>
<div class="t" style="top:477px;height:9px;line-height:9px;font-size:7.35px;color:#444;left:404.30px;width:300px;text-align:center;">09:10</div>
<div class="t" style="top:477px;height:9px;line-height:9px;font-size:7.35px;color:#444;left:443.90px;width:300px;text-align:center;">12:08</div>
<div class="t" style="top:477px;height:9px;line-height:9px;font-size:7.35px;color:#3f9e3f;right:329.60px;">2.96 h</div>
<div class="t" style="top:477px;height:9px;line-height:9px;font-size:7.35px;color:#3f9e3f;left:670.70px;">0.00</div>
<svg style="left:706.30px;top:480.85px;" width="1" height="1" viewBox="0 0 1 1"><g><path d="M-4.2 -2 L-2.6 -3.6 L2.6 -3.6 L2.6 4.7 L-4.2 4.7 Z" fill="#fff" stroke="#bdbdbd" stroke-width="0.8" stroke-linejoin="round"/><path d="M-0.6 3.2 L3.2 -3.9" stroke="#f0893a" stroke-width="2.2" stroke-linecap="round"/><path d="M-0.5 3 L3.1 -3.7" stroke="#fde3cc" stroke-width="0.7" stroke-linecap="round"/><path d="M-1.8 4.8 L-1.4 2.6 L0 3.6 Z" fill="#f0893a"/></g></svg>
<svg style="left:719.10px;top:481.05px;" width="1" height="1" viewBox="0 0 1 1"><circle cx="0" cy="-2.4" r="2.5" fill="#fff" stroke="#cfcfcf" stroke-width="0.8"/><path d="M0 0.2 L0 1.8 M-3.6 1.8 L3.6 1.8" fill="none" stroke="#cfcfcf" stroke-width="0.7"/><path d="M-4.6 4.3 L-3.6 2 L-2.6 4.3 Z M2.6 4.3 L3.6 2 L4.6 4.3 Z" fill="#cfcfcf"/></svg>
<svg style="left:756.20px;top:480.85px;" width="1" height="1" viewBox="0 0 1 1"><circle cx="0" cy="0" r="4.35" fill="#fff" stroke="#8565c6" stroke-width="0.95"/><path d="M0.52 -2.87 L0.22 0.22 L-1.30 2.17" fill="none" stroke="#8565c6" stroke-width="0.81" stroke-linecap="round" stroke-linejoin="round"/><path d="M0.87 4.35 L4.26 1.22" stroke="#fff" stroke-width="2.6" stroke-linecap="butt"/><path d="M0.96 4.26 L4.13 1.30" stroke="#f6c234" stroke-width="1.7" stroke-linecap="round"/></svg>
<svg style="left:768.70px;top:480.85px;" width="1" height="1" viewBox="0 0 1 1"><circle cx="0" cy="0" r="4.3" fill="#fff" stroke="#ee6a6f" stroke-width="0.85"/><path d="M-1.8059999999999998 0 L1.8059999999999998 0" stroke="#ee6a6f" stroke-width="1.2" stroke-linecap="round"/></svg>
<svg style="left:781.00px;top:480.85px;" width="1" height="1" viewBox="0 0 1 1"><rect x="-4.4" y="-4.5" width="8.8" height="6.6" rx="0.7" fill="#fff" stroke="#5c5c5c" stroke-width="0.95"/><path d="M0 2.3 L0 4 M-1.4 4.3 L1.4 4.3" stroke="#5c5c5c" stroke-width="1" stroke-linecap="butt"/></svg>
<svg style="left:800.70px;top:480.85px;" width="1" height="1" viewBox="0 0 1 1"><circle cx="0" cy="0" r="4.4" fill="#fff" stroke="#444" stroke-width="0.85"/><path d="M0.53 -2.90 L0.22 0.22 L-1.32 2.20" fill="none" stroke="#444" stroke-width="0.72" stroke-linecap="round" stroke-linejoin="round"/></svg>
<div style="left:156.10px;top:488.86px;width:326.00px;height:16.00px;background:#fdf9e9;"></div>
<div style="left:482.10px;top:488.86px;width:329.60px;height:16.00px;background:#d7e6f5;"></div>
<div style="left:156.10px;top:488.36px;width:655.60px;height:1.00px;background:#c4c8cc;"></div>
<div class="t" style="top:494px;height:7px;line-height:7px;font-size:6.1px;color:#1f961f;font-weight:bold;right:330.40px;">2.96 h</div>
<div style="left:156.10px;top:176.80px;width:655.60px;height:0.80px;background:#cdd0d3;"></div>
<div style="left:156.10px;top:275.48px;width:655.60px;height:0.80px;background:#cdd0d3;"></div>
<div style="left:156.10px;top:374.16px;width:655.60px;height:0.80px;background:#cdd0d3;"></div>
<div style="left:156.10px;top:472.84px;width:655.60px;height:0.80px;background:#cdd0d3;"></div>
<div style="left:155.70px;top:100.50px;width:0.80px;height:426.50px;background:#cdd0d4;"></div>
<div style="left:156.10px;top:527.60px;width:655.60px;height:24.00px;background:#fcfcfc;border-top:0.8px solid #d9dbde;"></div>
<svg style="left:164.40px;top:538.80px;" width="1" height="1" viewBox="0 0 1 1"><path d="M2.1 -4.4 L-2.1 0 L2.1 4.4" fill="none" stroke="#b5b5b5" stroke-width="0.8" stroke-linecap="round" stroke-linejoin="round"/></svg>
<svg style="left:168.20px;top:538.80px;" width="1" height="1" viewBox="0 0 1 1"><path d="M2.1 -4.4 L-2.1 0 L2.1 4.4" fill="none" stroke="#b5b5b5" stroke-width="0.8" stroke-linecap="round" stroke-linejoin="round"/></svg>
<svg style="left:187.00px;top:538.80px;" width="1" height="1" viewBox="0 0 1 1"><path d="M2.1 -4.4 L-2.1 0 L2.1 4.4" fill="none" stroke="#b5b5b5" stroke-width="0.8" stroke-linecap="round" stroke-linejoin="round"/></svg>
<div style="left:200.30px;top:533.50px;width:0.70px;height:10.50px;background:#d8d8d8;"></div>
<div class="t" style="top:535px;height:9px;line-height:9px;font-size:7.3px;color:#444;left:210.60px;letter-spacing:-0.083px;">Page</div>
<div style="left:238.20px;top:532.30px;width:25.60px;height:13.20px;background:#fff;border:0.8px solid #cfcfcf;"></div>
<div class="t" style="top:535px;height:9px;line-height:9px;font-size:7.3px;color:#444;left:243.00px;">1</div>
<div class="t" style="top:535px;height:9px;line-height:9px;font-size:7.3px;color:#444;left:270.20px;letter-spacing:-0.025px;">of 1</div>
<div style="left:292.80px;top:533.50px;width:0.70px;height:10.50px;background:#d8d8d8;"></div>
<svg style="left:306.60px;top:538.80px;" width="1" height="1" viewBox="0 0 1 1"><path d="M-2.1 -4.4 L2.1 0 L-2.1 4.4" fill="none" stroke="#b5b5b5" stroke-width="0.8" stroke-linecap="round" stroke-linejoin="round"/></svg>
<svg style="left:325.00px;top:538.80px;" width="1" height="1" viewBox="0 0 1 1"><path d="M-2.1 -4.4 L2.1 0 L-2.1 4.4" fill="none" stroke="#b5b5b5" stroke-width="0.8" stroke-linecap="round" stroke-linejoin="round"/></svg>
<svg style="left:328.80px;top:538.80px;" width="1" height="1" viewBox="0 0 1 1"><path d="M-2.1 -4.4 L2.1 0 L-2.1 4.4" fill="none" stroke="#b5b5b5" stroke-width="0.8" stroke-linecap="round" stroke-linejoin="round"/></svg>
<div style="left:341.00px;top:533.50px;width:0.70px;height:10.50px;background:#d8d8d8;"></div>
<svg style="left:354.60px;top:538.60px;" width="1" height="1" viewBox="0 0 1 1"><path d="M4.10 -2.87 A5 5 0 1 0 4.92 0.87" fill="none" stroke="#9a9a9a" stroke-width="0.8" stroke-linecap="round"/><path d="M1.35 -2.27 L4.20 -2.67 L4.60 -5.87" fill="none" stroke="#9a9a9a" stroke-width="0.8" stroke-linecap="round" stroke-linejoin="round"/></svg>
<div class="t" style="top:535px;height:9px;line-height:9px;font-size:7.3px;color:#444;left:577.90px;letter-spacing:0.028px;">Showing 1 - 13 of 13</div>
<div style="left:655.50px;top:533.50px;width:0.70px;height:10.50px;background:#d8d8d8;"></div>
<div class="t" style="top:535px;height:9px;line-height:9px;font-size:7.3px;color:#444;left:666.00px;letter-spacing:0.013px;">Show</div>
<div style="left:694.30px;top:532.30px;width:33.60px;height:13.20px;background:#fff;border:0.8px solid #cfcfcf;"></div>
<div class="t" style="top:535px;height:9px;line-height:9px;font-size:7.3px;color:#444;left:697.50px;">20</div>
<svg style="left:720.60px;top:538.80px;" width="1" height="1" viewBox="0 0 1 1"><path d="M-2.4 -1.3 L0 1.3 L2.4 -1.3" fill="none" stroke="#888" stroke-width="0.9" stroke-linecap="round" stroke-linejoin="round"/></svg>
<div class="t" style="top:535px;height:9px;line-height:9px;font-size:7.3px;color:#444;left:739.60px;letter-spacing:-0.018px;">Elements per Page</div>
<svg style="left:152.60px;top:315.00px;" width="1" height="1" viewBox="0 0 1 1"><path d="M1.1 -2.4 L-1.1 0 L1.1 2.4" fill="none" stroke="#cfcfcf" stroke-width="0.7" stroke-linecap="round" stroke-linejoin="round"/></svg>
<div style="left:812.30px;top:126.50px;width:167.70px;height:424.50px;background:#f3f4f5;"></div>
<svg style="left:814.30px;top:339.00px;" width="1" height="1" viewBox="0 0 1 1"><path d="M-1.1 -2.4 L1.1 0 L-1.1 2.4" fill="none" stroke="#bbb" stroke-width="0.7" stroke-linecap="round" stroke-linejoin="round"/></svg>
<div class="t" style="top:135px;height:10px;line-height:10px;font-size:9.2px;color:#5a78c4;left:823.60px;letter-spacing:0.216px;">Monday, 11.07.2016</div>
<svg style="left:968.40px;top:139.60px;" width="1" height="1" viewBox="0 0 1 1"><circle cx="0" cy="0" r="5.1" fill="none" stroke="#8c8c8c" stroke-width="0.9"/><path d="M-1.275 -2.55 L1.5299999999999998 0 L-1.275 2.55" fill="none" stroke="#8c8c8c" stroke-width="0.9" stroke-linecap="round" stroke-linejoin="round"/></svg>
<div style="left:817.80px;top:152.90px;width:32.70px;height:400.00px;background:#f0f4f9;border-top:0.8px solid #d8dbe0;"></div>
<div style="left:850.30px;top:152.50px;width:116.70px;height:400.00px;background:#fff;border-left:0.8px solid #d5dbe6;border-right:0.8px solid #c9d3f0;"></div>
<div style="left:817.80px;top:152.10px;width:149.20px;height:0.80px;background:#dcdfe4;"></div>
<div style="left:851.00px;top:165.95px;width:115.50px;height:0.60px;background:#eceef1;"></div>
<div class="t" style="top:155px;height:9px;line-height:9px;font-size:7.2px;color:#1c1c1c;right:132.40px;">05:00</div>
<div style="left:817.80px;top:179.60px;width:149.20px;height:0.80px;background:#dcdfe4;"></div>
<div style="left:851.00px;top:193.45px;width:115.50px;height:0.60px;background:#eceef1;"></div>
<div class="t" style="top:182px;height:9px;line-height:9px;font-size:7.2px;color:#1c1c1c;right:132.40px;">06:00</div>
<div style="left:817.80px;top:207.10px;width:149.20px;height:0.80px;background:#dcdfe4;"></div>
<div style="left:851.00px;top:220.95px;width:115.50px;height:0.60px;background:#eceef1;"></div>
<div class="t" style="top:210px;height:9px;line-height:9px;font-size:7.2px;color:#1c1c1c;right:132.40px;">07:00</div>
<div style="left:817.80px;top:234.60px;width:149.20px;height:0.80px;background:#dcdfe4;"></div>
<div style="left:851.00px;top:248.45px;width:115.50px;height:0.60px;background:#eceef1;"></div>
<div class="t" style="top:237px;height:9px;line-height:9px;font-size:7.2px;color:#1c1c1c;right:132.40px;">08:00</div>
<div style="left:817.80px;top:262.10px;width:149.20px;height:0.80px;background:#dcdfe4;"></div>
<div style="left:851.00px;top:275.95px;width:115.50px;height:0.60px;background:#eceef1;"></div>
<div class="t" style="top:265px;height:9px;line-height:9px;font-size:7.2px;color:#1c1c1c;right:132.40px;">09:00</div>
<div style="left:817.80px;top:289.60px;width:149.20px;height:0.80px;background:#dcdfe4;"></div>
<div style="left:851.00px;top:303.45px;width:115.50px;height:0.60px;background:#eceef1;"></div>
<div class="t" style="top:292px;height:9px;line-height:9px;font-size:7.2px;color:#1c1c1c;right:132.40px;">10:00</div>
<div style="left:817.80px;top:317.10px;width:149.20px;height:0.80px;background:#dcdfe4;"></div>
<div style="left:851.00px;top:330.95px;width:115.50px;height:0.60px;background:#eceef1;"></div>
<div class="t" style="top:320px;height:9px;line-height:9px;font-size:7.2px;color:#1c1c1c;right:132.40px;">11:00</div>
<div style="left:817.80px;top:344.60px;width:149.20px;height:0.80px;background:#dcdfe4;"></div>
<div style="left:851.00px;top:358.45px;width:115.50px;height:0.60px;background:#eceef1;"></div>
<div class="t" style="top:347px;height:9px;line-height:9px;font-size:7.2px;color:#1c1c1c;right:132.40px;">12:00</div>
<div style="left:817.80px;top:372.10px;width:149.20px;height:0.80px;background:#dcdfe4;"></div>
<div style="left:851.00px;top:385.95px;width:115.50px;height:0.60px;background:#eceef1;"></div>
<div class="t" style="top:375px;height:9px;line-height:9px;font-size:7.2px;color:#1c1c1c;right:132.40px;">13:00</div>
<div style="left:817.80px;top:399.60px;width:149.20px;height:0.80px;background:#dcdfe4;"></div>
<div style="left:851.00px;top:413.45px;width:115.50px;height:0.60px;background:#eceef1;"></div>
<div class="t" style="top:402px;height:9px;line-height:9px;font-size:7.2px;color:#1c1c1c;right:132.40px;">14:00</div>
<div style="left:817.80px;top:427.10px;width:149.20px;height:0.80px;background:#dcdfe4;"></div>
<div style="left:851.00px;top:440.95px;width:115.50px;height:0.60px;background:#eceef1;"></div>
<div class="t" style="top:430px;height:9px;line-height:9px;font-size:7.2px;color:#1c1c1c;right:132.40px;">15:00</div>
<div style="left:817.80px;top:454.60px;width:149.20px;height:0.80px;background:#dcdfe4;"></div>
<div style="left:851.00px;top:468.45px;width:115.50px;height:0.60px;background:#eceef1;"></div>
<div class="t" style="top:457px;height:9px;line-height:9px;font-size:7.2px;color:#1c1c1c;right:132.40px;">16:00</div>
<div style="left:817.80px;top:482.10px;width:149.20px;height:0.80px;background:#dcdfe4;"></div>
<div style="left:851.00px;top:495.95px;width:115.50px;height:0.60px;background:#eceef1;"></div>
<div class="t" style="top:485px;height:9px;line-height:9px;font-size:7.2px;color:#1c1c1c;right:132.40px;">17:00</div>
<div style="left:817.80px;top:509.60px;width:149.20px;height:0.80px;background:#dcdfe4;"></div>
<div style="left:851.00px;top:523.45px;width:115.50px;height:0.60px;background:#eceef1;"></div>
<div class="t" style="top:512px;height:9px;line-height:9px;font-size:7.2px;color:#1c1c1c;right:132.40px;">18:00</div>
<div style="left:817.80px;top:537.10px;width:149.20px;height:0.80px;background:#dcdfe4;"></div>
<div style="left:851.00px;top:550.95px;width:115.50px;height:0.60px;background:#eceef1;"></div>
<div class="t" style="top:540px;height:9px;line-height:9px;font-size:7.2px;color:#1c1c1c;right:132.40px;">19:00</div>
<div style="left:967.40px;top:152.50px;width:12.60px;height:400.00px;background:#f4f4f4;"></div>
<svg style="left:973.60px;top:159.00px;" width="1" height="1" viewBox="0 0 1 1"><path d="M-2.4 1.3 L0 -1.5 L2.4 1.3 Z" fill="#444"/></svg>
<svg style="left:973.60px;top:543.60px;" width="1" height="1" viewBox="0 0 1 1"><path d="M-2.4 -1.3 L0 1.5 L2.4 -1.3 Z" fill="#444"/></svg>
<div style="left:969.60px;top:242.00px;width:7.60px;height:225.30px;background:#c1c1c1;"></div>
<div style="left:851.60px;top:236.20px;width:111.60px;height:107.20px;background:#2e6ca7;border-radius:2px;overflow:hidden;"></div>
<div class="t" style="top:238px;height:8px;line-height:8px;font-size:7.1px;color:#fff;left:855.20px;letter-spacing:-0.006px;text-shadow:0 0 0.4px #fff;">08:00 - 12:00 Working</div>
<div style="left:851.60px;top:345.90px;width:111.60px;height:14.10px;background:#2e6ca7;border-radius:2px;overflow:hidden;"></div>
<div class="t" style="top:348px;height:8px;line-height:8px;font-size:7.1px;color:#fff;left:855.20px;letter-spacing:-0.006px;text-shadow:0 0 0.4px #fff;">12:00 - 12:15 Working</div>
<div style="left:851.60px;top:352.40px;width:111.60px;height:26.30px;background:#86a723;border-radius:2px;overflow:hidden;"></div>
<div class="t" style="top:355px;height:8px;line-height:8px;font-size:7.1px;color:#fff;left:855.20px;letter-spacing:-0.004px;text-shadow:0 0 0.4px #fff;">12:15 - 13:15 Break</div>
<div style="left:851.60px;top:380.30px;width:111.60px;height:115.20px;background:#2e6ca7;border-radius:2px;overflow:hidden;"></div>
<div class="t" style="top:382px;height:8px;line-height:8px;font-size:7.1px;color:#fff;left:855.20px;letter-spacing:-0.006px;text-shadow:0 0 0.4px #fff;">13:15 - 17:30 Working</div>
<div style="left:764.30px;top:216.90px;width:120.20px;height:18.70px;background:#f1f4f9;border:0.6px solid #e3e6ec;border-radius:4px;box-shadow:0 0.5px 3px rgba(0,0,0,0.25);"></div>
<div class="t" style="top:221px;height:10px;line-height:10px;font-size:9.0px;color:#3a3a3a;left:768.80px;letter-spacing:-0.146px;">Request Timestamp Change</div>
<svg style="left:750.90px;top:199.20px;" width="16" height="22" viewBox="0 0 16 22"><path d="M4.7 2.2 Q4.7 1 5.7 1 Q6.7 1 6.7 2.2 L6.7 7.6 L6.7 6.6 Q6.7 5.8 7.7 5.8 Q8.7 5.8 8.7 6.8 L8.7 8.2 L8.7 7.3 Q8.7 6.5 9.7 6.5 Q10.7 6.5 10.7 7.5 L10.7 9 L10.7 8.3 Q10.7 7.5 11.6 7.5 Q12.5 7.5 12.5 8.6 L12.5 12.6 Q12.5 15.2 11.4 17.6 L5.6 17.6 Q4.4 15 2.2 12.6 Q1 11.2 2 10.4 Q3 9.8 4.7 11.4 Z" fill="#fff" stroke="#333" stroke-width="0.85" stroke-linejoin="round"/></svg>
<div style="left:0.00px;top:0.00px;width:980.00px;height:551.00px;border:1px solid #9a9a9a;border-bottom-width:1.5px;pointer-events:none;"></div>
</div></body></html>
